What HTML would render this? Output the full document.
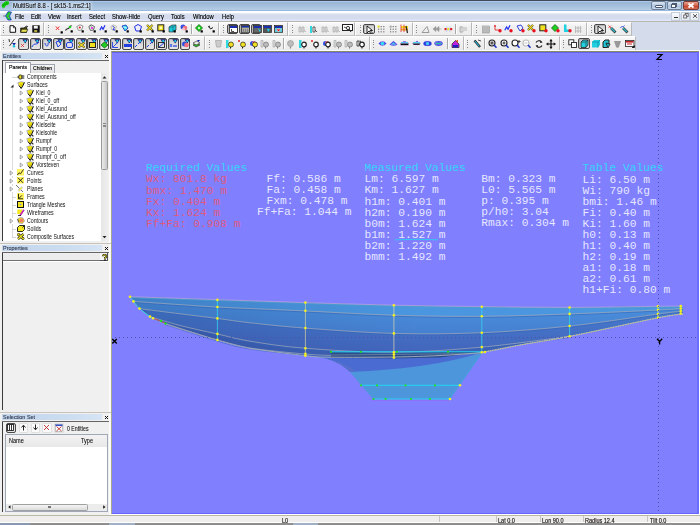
<!DOCTYPE html><html><head><meta charset="utf-8"><style>
html,body{margin:0;padding:0;}
body{width:700px;height:525px;position:relative;overflow:hidden;background:#f0f0f0;font-family:"Liberation Sans",sans-serif;}
div{box-sizing:border-box;}
.t{position:absolute;white-space:nowrap;transform-origin:0 0;font-family:"Liberation Sans",sans-serif;}
.ic{position:absolute;}
</style></head><body>
<div style="position:absolute;left:0px;top:0px;width:700px;height:11px;background:linear-gradient(#404a58 0,#404a58 1px,#a8c8ee 1px,#a8c8ee 2px,#98b4d2 2px,#b4cde6 10px,#98b8e0 10px,#98b8e0 11px)"></div>
<svg class="ic" style="left:0px;top:0px" width="11" height="10" viewBox="0 0 11 10"><path d="M1.6 4 L4 2.2 L5.5 .9 L8.8 .8 L9.6 3 L8.4 5.3 L6 5.8 L4.8 8 L2.4 8.4 L1.4 6.2 Z" fill="#10d010" stroke="#d0b0f0" stroke-width=".6"/><circle cx="3.3" cy="5.2" r=".6" fill="#087008"/><circle cx="6.8" cy="3" r=".6" fill="#087008"/><circle cx="5" cy="4" r=".5" fill="#087008"/></svg>
<div style="position:absolute;left:12px;top:2px;width:80px;height:7.5px;background:#c8daee;filter:blur(1.2px);opacity:.8"></div>
<div class="t" style="left:13px;top:2.93px;font-size:6.7px;line-height:6.7px;color:#000;transform:scaleX(0.87);-webkit-text-stroke:0.1px #000;text-shadow:0 0 2px #e8f0f8;">MultiSurf 8.8 - [ sk15-1.ms2:1]</div>
<div style="position:absolute;left:651px;top:1px;width:15px;height:9px;border:1px solid #6f8198;border-radius:2px;background:linear-gradient(#dbe6f3,#b8cbe3 50%,#a6bcd8 51%,#c6d8ee)"></div>
<div style="position:absolute;left:654.5px;top:4.5px;width:8px;height:3.5px;background:#fff;border:1px solid #4b5a70;border-radius:1px"></div>
<div style="position:absolute;left:667px;top:1px;width:15px;height:9px;border:1px solid #6f8198;border-radius:2px;background:linear-gradient(#dbe6f3,#b8cbe3 50%,#a6bcd8 51%,#c6d8ee)"></div>
<div style="position:absolute;left:672px;top:2.5px;width:5px;height:4px;border:1px solid #4b5a70;background:#fff"></div>
<div style="position:absolute;left:670.5px;top:4px;width:5px;height:4px;border:1px solid #4b5a70;background:#fff"></div>
<div style="position:absolute;left:683px;top:1px;width:16px;height:9px;border:1px solid #7d3a30;border-radius:2px;background:linear-gradient(#e8a898,#d0604a 50%,#c03a22 51%,#d8705a)"></div>
<svg class="ic" style="left:687px;top:2px" width="8" height="7"><path d="M1.5 1.5 L6.5 5.5 M6.5 1.5 L1.5 5.5" stroke="#fff" stroke-width="1.8"/></svg>
<div style="position:absolute;left:0px;top:11px;width:700px;height:10px;background:linear-gradient(#ffffff 0,#ffffff 2px,#e8ecf4 2px,#d4dcee 4px,#d4dcee 8px,#e0e6fa 9px,#e0e6fa 10px)"></div>
<svg class="ic" style="left:3px;top:11px" width="10" height="10" viewBox="0 0 10 10"><path d="M5 .7 L8.5 1 L6.5 5 L8.3 9 L5 9 L2.5 5 Z" fill="#20d020" stroke="#2030d0" stroke-width=".8"/><path d="M.5 4.6 L2.5 5 L.5 5.4Z" fill="#111"/><circle cx="5" cy="4" r=".5" fill="#b070b0"/><circle cx="5.5" cy="6.5" r=".5" fill="#b070b0"/></svg>
<div class="t" style="left:15px;top:13.84px;font-size:6.45px;line-height:6.45px;color:#000;transform:scaleX(0.9);-webkit-text-stroke:0.14px #000;">File</div>
<div class="t" style="left:31px;top:13.84px;font-size:6.45px;line-height:6.45px;color:#000;transform:scaleX(0.9);-webkit-text-stroke:0.14px #000;">Edit</div>
<div class="t" style="left:48px;top:13.84px;font-size:6.45px;line-height:6.45px;color:#000;transform:scaleX(0.9);-webkit-text-stroke:0.14px #000;">View</div>
<div class="t" style="left:67px;top:13.84px;font-size:6.45px;line-height:6.45px;color:#000;transform:scaleX(0.9);-webkit-text-stroke:0.14px #000;">Insert</div>
<div class="t" style="left:89px;top:13.84px;font-size:6.45px;line-height:6.45px;color:#000;transform:scaleX(0.9);-webkit-text-stroke:0.14px #000;">Select</div>
<div class="t" style="left:111.5px;top:13.84px;font-size:6.45px;line-height:6.45px;color:#000;transform:scaleX(0.9);-webkit-text-stroke:0.14px #000;">Show-Hide</div>
<div class="t" style="left:148px;top:13.84px;font-size:6.45px;line-height:6.45px;color:#000;transform:scaleX(0.9);-webkit-text-stroke:0.14px #000;">Query</div>
<div class="t" style="left:171.4px;top:13.84px;font-size:6.45px;line-height:6.45px;color:#000;transform:scaleX(0.9);-webkit-text-stroke:0.14px #000;">Tools</div>
<div class="t" style="left:192.5px;top:13.84px;font-size:6.45px;line-height:6.45px;color:#000;transform:scaleX(0.9);-webkit-text-stroke:0.14px #000;">Window</div>
<div class="t" style="left:221.7px;top:13.84px;font-size:6.45px;line-height:6.45px;color:#000;transform:scaleX(0.9);-webkit-text-stroke:0.14px #000;">Help</div>
<div style="position:absolute;left:671px;top:11.5px;width:9px;height:9px;background:linear-gradient(#f8fafc,#e4eaf2);border:1px solid #c4ccd8;"></div>
<div style="position:absolute;left:680.5px;top:11.5px;width:9px;height:9px;background:linear-gradient(#f8fafc,#e4eaf2);border:1px solid #c4ccd8;"></div>
<div style="position:absolute;left:690px;top:11.5px;width:9px;height:9px;background:linear-gradient(#f8fafc,#e4eaf2);border:1px solid #c4ccd8;"></div>
<div style="position:absolute;left:674px;top:17px;width:3.5px;height:1.2px;background:#333"></div>
<svg class="ic" style="left:682.5px;top:13px" width="6" height="6"><rect x="2.2" y="0.5" width="3" height="3" fill="none" stroke="#555" stroke-width=".8"/><rect x="0.7" y="2" width="3" height="3" fill="#eef" stroke="#555" stroke-width=".8"/></svg>
<svg class="ic" style="left:691.5px;top:13px" width="6" height="6"><path d="M1 1.2 L5 4.8 M5 1.2 L1 4.8" stroke="#444" stroke-width=".9"/></svg>
<div style="position:absolute;left:0px;top:21px;width:700px;height:1px;background:#b8b8b0"></div>
<div style="position:absolute;left:0px;top:22px;width:700px;height:29px;background:#d4dcec"></div>
<div style="position:absolute;left:0px;top:22px;width:44px;height:14px;background:linear-gradient(#fafafa,#f0f0f0 30%,#ececec);border-top:1px solid #fff;border-left:1px solid #fff;border-bottom:1px solid #c4c4c4;border-right:1px solid #b8b8b8"></div>
<div style="position:absolute;left:44px;top:22px;width:175px;height:14px;background:linear-gradient(#fafafa,#f0f0f0 30%,#ececec);border-top:1px solid #fff;border-left:1px solid #fff;border-bottom:1px solid #c4c4c4;border-right:1px solid #b8b8b8"></div>
<div style="position:absolute;left:219px;top:22px;width:69px;height:14px;background:linear-gradient(#fafafa,#f0f0f0 30%,#ececec);border-top:1px solid #fff;border-left:1px solid #fff;border-bottom:1px solid #c4c4c4;border-right:1px solid #b8b8b8"></div>
<div style="position:absolute;left:288px;top:22px;width:67px;height:14px;background:linear-gradient(#fafafa,#f0f0f0 30%,#ececec);border-top:1px solid #fff;border-left:1px solid #fff;border-bottom:1px solid #c4c4c4;border-right:1px solid #b8b8b8"></div>
<div style="position:absolute;left:355px;top:22px;width:58px;height:14px;background:linear-gradient(#fafafa,#f0f0f0 30%,#ececec);border-top:1px solid #fff;border-left:1px solid #fff;border-bottom:1px solid #c4c4c4;border-right:1px solid #b8b8b8"></div>
<div style="position:absolute;left:413px;top:22px;width:59px;height:14px;background:linear-gradient(#fafafa,#f0f0f0 30%,#ececec);border-top:1px solid #fff;border-left:1px solid #fff;border-bottom:1px solid #c4c4c4;border-right:1px solid #b8b8b8"></div>
<div style="position:absolute;left:472px;top:22px;width:115px;height:14px;background:linear-gradient(#fafafa,#f0f0f0 30%,#ececec);border-top:1px solid #fff;border-left:1px solid #fff;border-bottom:1px solid #c4c4c4;border-right:1px solid #b8b8b8"></div>
<div style="position:absolute;left:587px;top:22px;width:45px;height:14px;background:linear-gradient(#fafafa,#f0f0f0 30%,#ececec);border-top:1px solid #fff;border-left:1px solid #fff;border-bottom:1px solid #c4c4c4;border-right:1px solid #b8b8b8"></div>
<div style="position:absolute;left:0px;top:36px;width:205px;height:15px;background:linear-gradient(#fafafa,#f0f0f0 30%,#ececec);border-top:1px solid #fff;border-left:1px solid #fff;border-bottom:1px solid #c4c4c4;border-right:1px solid #b8b8b8"></div>
<div style="position:absolute;left:205px;top:36px;width:165px;height:15px;background:linear-gradient(#fafafa,#f0f0f0 30%,#ececec);border-top:1px solid #fff;border-left:1px solid #fff;border-bottom:1px solid #c4c4c4;border-right:1px solid #b8b8b8"></div>
<div style="position:absolute;left:370px;top:36px;width:94px;height:15px;background:linear-gradient(#fafafa,#f0f0f0 30%,#ececec);border-top:1px solid #fff;border-left:1px solid #fff;border-bottom:1px solid #c4c4c4;border-right:1px solid #b8b8b8"></div>
<div style="position:absolute;left:464px;top:36px;width:96px;height:15px;background:linear-gradient(#fafafa,#f0f0f0 30%,#ececec);border-top:1px solid #fff;border-left:1px solid #fff;border-bottom:1px solid #c4c4c4;border-right:1px solid #b8b8b8"></div>
<div style="position:absolute;left:560px;top:36px;width:76px;height:15px;background:linear-gradient(#fafafa,#f0f0f0 30%,#ececec);border-top:1px solid #fff;border-left:1px solid #fff;border-bottom:1px solid #c4c4c4;border-right:1px solid #b8b8b8"></div>
<div style="position:absolute;left:0px;top:50px;width:700px;height:1px;background:#fafafa"></div>
<div style="position:absolute;left:3px;top:25.0px;width:1px;height:1px;background:#8a8a8a"></div>
<div style="position:absolute;left:3px;top:27.4px;width:1px;height:1px;background:#8a8a8a"></div>
<div style="position:absolute;left:3px;top:29.8px;width:1px;height:1px;background:#8a8a8a"></div>
<div style="position:absolute;left:3px;top:32.2px;width:1px;height:1px;background:#8a8a8a"></div>
<div style="position:absolute;left:48px;top:25.0px;width:1px;height:1px;background:#8a8a8a"></div>
<div style="position:absolute;left:48px;top:27.4px;width:1px;height:1px;background:#8a8a8a"></div>
<div style="position:absolute;left:48px;top:29.8px;width:1px;height:1px;background:#8a8a8a"></div>
<div style="position:absolute;left:48px;top:32.2px;width:1px;height:1px;background:#8a8a8a"></div>
<div style="position:absolute;left:223px;top:25.0px;width:1px;height:1px;background:#8a8a8a"></div>
<div style="position:absolute;left:223px;top:27.4px;width:1px;height:1px;background:#8a8a8a"></div>
<div style="position:absolute;left:223px;top:29.8px;width:1px;height:1px;background:#8a8a8a"></div>
<div style="position:absolute;left:223px;top:32.2px;width:1px;height:1px;background:#8a8a8a"></div>
<div style="position:absolute;left:292px;top:25.0px;width:1px;height:1px;background:#8a8a8a"></div>
<div style="position:absolute;left:292px;top:27.4px;width:1px;height:1px;background:#8a8a8a"></div>
<div style="position:absolute;left:292px;top:29.8px;width:1px;height:1px;background:#8a8a8a"></div>
<div style="position:absolute;left:292px;top:32.2px;width:1px;height:1px;background:#8a8a8a"></div>
<div style="position:absolute;left:360px;top:25.0px;width:1px;height:1px;background:#8a8a8a"></div>
<div style="position:absolute;left:360px;top:27.4px;width:1px;height:1px;background:#8a8a8a"></div>
<div style="position:absolute;left:360px;top:29.8px;width:1px;height:1px;background:#8a8a8a"></div>
<div style="position:absolute;left:360px;top:32.2px;width:1px;height:1px;background:#8a8a8a"></div>
<div style="position:absolute;left:416px;top:25.0px;width:1px;height:1px;background:#8a8a8a"></div>
<div style="position:absolute;left:416px;top:27.4px;width:1px;height:1px;background:#8a8a8a"></div>
<div style="position:absolute;left:416px;top:29.8px;width:1px;height:1px;background:#8a8a8a"></div>
<div style="position:absolute;left:416px;top:32.2px;width:1px;height:1px;background:#8a8a8a"></div>
<div style="position:absolute;left:476px;top:25.0px;width:1px;height:1px;background:#8a8a8a"></div>
<div style="position:absolute;left:476px;top:27.4px;width:1px;height:1px;background:#8a8a8a"></div>
<div style="position:absolute;left:476px;top:29.8px;width:1px;height:1px;background:#8a8a8a"></div>
<div style="position:absolute;left:476px;top:32.2px;width:1px;height:1px;background:#8a8a8a"></div>
<div style="position:absolute;left:591px;top:25.0px;width:1px;height:1px;background:#8a8a8a"></div>
<div style="position:absolute;left:591px;top:27.4px;width:1px;height:1px;background:#8a8a8a"></div>
<div style="position:absolute;left:591px;top:29.8px;width:1px;height:1px;background:#8a8a8a"></div>
<div style="position:absolute;left:591px;top:32.2px;width:1px;height:1px;background:#8a8a8a"></div>
<div style="position:absolute;left:3px;top:39.5px;width:1px;height:1px;background:#8a8a8a"></div>
<div style="position:absolute;left:3px;top:41.9px;width:1px;height:1px;background:#8a8a8a"></div>
<div style="position:absolute;left:3px;top:44.3px;width:1px;height:1px;background:#8a8a8a"></div>
<div style="position:absolute;left:3px;top:46.7px;width:1px;height:1px;background:#8a8a8a"></div>
<div style="position:absolute;left:209px;top:39.5px;width:1px;height:1px;background:#8a8a8a"></div>
<div style="position:absolute;left:209px;top:41.9px;width:1px;height:1px;background:#8a8a8a"></div>
<div style="position:absolute;left:209px;top:44.3px;width:1px;height:1px;background:#8a8a8a"></div>
<div style="position:absolute;left:209px;top:46.7px;width:1px;height:1px;background:#8a8a8a"></div>
<div style="position:absolute;left:373px;top:39.5px;width:1px;height:1px;background:#8a8a8a"></div>
<div style="position:absolute;left:373px;top:41.9px;width:1px;height:1px;background:#8a8a8a"></div>
<div style="position:absolute;left:373px;top:44.3px;width:1px;height:1px;background:#8a8a8a"></div>
<div style="position:absolute;left:373px;top:46.7px;width:1px;height:1px;background:#8a8a8a"></div>
<div style="position:absolute;left:467px;top:39.5px;width:1px;height:1px;background:#8a8a8a"></div>
<div style="position:absolute;left:467px;top:41.9px;width:1px;height:1px;background:#8a8a8a"></div>
<div style="position:absolute;left:467px;top:44.3px;width:1px;height:1px;background:#8a8a8a"></div>
<div style="position:absolute;left:467px;top:46.7px;width:1px;height:1px;background:#8a8a8a"></div>
<div style="position:absolute;left:563px;top:39.5px;width:1px;height:1px;background:#8a8a8a"></div>
<div style="position:absolute;left:563px;top:41.9px;width:1px;height:1px;background:#8a8a8a"></div>
<div style="position:absolute;left:563px;top:44.3px;width:1px;height:1px;background:#8a8a8a"></div>
<div style="position:absolute;left:563px;top:46.7px;width:1px;height:1px;background:#8a8a8a"></div>
<div style="position:absolute;left:191px;top:24px;width:1px;height:10px;background:#a8a8a8"></div>
<div style="position:absolute;left:192px;top:24px;width:1px;height:10px;background:#fff"></div>
<div style="position:absolute;left:455px;top:24px;width:1px;height:10px;background:#a8a8a8"></div>
<div style="position:absolute;left:456px;top:24px;width:1px;height:10px;background:#fff"></div>
<div style="position:absolute;left:283px;top:38px;width:1px;height:11px;background:#a8a8a8"></div>
<div style="position:absolute;left:284px;top:38px;width:1px;height:11px;background:#fff"></div>
<div style="position:absolute;left:447px;top:38px;width:1px;height:11px;background:#a8a8a8"></div>
<div style="position:absolute;left:448px;top:38px;width:1px;height:11px;background:#fff"></div>
<div style="position:absolute;left:484px;top:38px;width:1px;height:11px;background:#a8a8a8"></div>
<div style="position:absolute;left:485px;top:38px;width:1px;height:11px;background:#fff"></div>
<svg class="ic" style="left:9px;top:24.5px" width="8" height="8" viewBox="0 0 8 8"><path d="M1 .7H4.5L6.6 2.8V7.3H1Z" fill="#fff" stroke="#111" stroke-width="1"/><path d="M4.5 .7V2.8H6.6" stroke="#111" fill="none" stroke-width=".7"/></svg>
<svg class="ic" style="left:20px;top:24.5px" width="9" height="8" viewBox="0 0 9 8"><path d="M.7 3H4L5 2.2H6.5V7.3H.7Z" fill="#5a5410" stroke="#111" stroke-width=".8"/><path d="M1.5 4.2H7.8L6.5 7.3H.7Z" fill="#e8e050" stroke="#111" stroke-width=".7"/><path d="M5.5 1.5Q7 .5 8 2" stroke="#111" fill="none" stroke-width=".9"/></svg>
<svg class="ic" style="left:31.5px;top:24.5px" width="8" height="8" viewBox="0 0 8 8"><rect x=".3" y=".3" width="7.4" height="7.4" fill="#111"/><rect x="1.8" y=".8" width="4" height="2.8" fill="#f4f4f4"/><rect x="2.2" y="5" width="3" height="2.2" fill="#b0a840"/></svg>
<svg class="ic" style="left:55px;top:24.5px" width="9" height="9" viewBox="0 0 9 9"><path d="M.8 1.5L4.3 5M4.3 1.5L.8 5" stroke="#f03030" stroke-width="1"/><rect x="5.6" y="6.3" width="2.2" height="2.2" fill="#000"/></svg>
<svg class="ic" style="left:65px;top:24px" width="9" height="9" viewBox="0 0 9 9"><path d="M.5 6.5 C1.5 4,3 5.5,4 4 S5.5 2,6.5 1.5" stroke="#222" fill="none" stroke-width="1.1"/><circle cx="5" cy="3" r="1.3" fill="#20d020"/><rect x="5.6" y="6.3" width="2.2" height="2.2" fill="#000"/></svg>
<svg class="ic" style="left:76px;top:24px" width="9" height="9" viewBox="0 0 9 9"><path d="M.8 2.5L4 .8L7 2L5.5 6L2.5 6.5Z" fill="#fff" stroke="#888" stroke-width=".9"/><circle cx="3.8" cy="3.5" r="1.1" fill="#e02020"/><rect x="5.6" y="6.3" width="2.2" height="2.2" fill="#000"/></svg>
<svg class="ic" style="left:87.5px;top:24px" width="9" height="9" viewBox="0 0 9 9"><path d="M.8 2.5L3 .8L6.5 2.5L5.5 6L2.5 6.5Z" fill="#eee" stroke="#555" stroke-width=".9"/><path d="M2 1L5 5" stroke="#282" stroke-width=".6"/><circle cx="4" cy="4" r="1.1" fill="#f020f0"/><rect x="5.6" y="6.3" width="2.2" height="2.2" fill="#000"/></svg>
<svg class="ic" style="left:99px;top:24px" width="9" height="9" viewBox="0 0 9 9"><path d="M.8 6.3 L2.6 3 L4 5.3 L6 1.2" stroke="#2030f0" fill="none" stroke-width="1.2"/><rect x="5.6" y="6.3" width="2.2" height="2.2" fill="#000"/></svg>
<svg class="ic" style="left:110px;top:24px" width="9" height="9" viewBox="0 0 9 9"><path d="M.8 2.5L3.5 .8L6.5 2.5L5 6.5L2 6Z" fill="#f0f0d0" stroke="#aaa" stroke-width=".7"/><path d="M2.5 2L4.5 3.5L3 5.5L5 6" stroke="#2030f0" fill="none" stroke-width="1"/><rect x="5.6" y="6.3" width="2.2" height="2.2" fill="#000"/></svg>
<svg class="ic" style="left:121px;top:24px" width="9" height="9" viewBox="0 0 9 9"><path d="M1 2L5 1L7 4L4 7Z" fill="#40e0f0" stroke="#2040c0" stroke-width=".9"/><path d="M2 3L6 4" stroke="#fff" stroke-width=".6"/><rect x="5.6" y="6.3" width="2.2" height="2.2" fill="#000"/></svg>
<svg class="ic" style="left:134px;top:24px" width="9" height="9" viewBox="0 0 9 9"><path d="M.5 2.5L4 .5L7.5 2.5L6 7L2 7Z" fill="#eef" stroke="#2030e0" stroke-width="1"/><rect x="5.6" y="6.3" width="2.2" height="2.2" fill="#000"/></svg>
<svg class="ic" style="left:146px;top:24px" width="9" height="9" viewBox="0 0 9 9"><path d="M1 1L6.5 6.5M6.5 1L1 6.5" stroke="#222" stroke-width="2"/><path d="M1 1L6.5 6.5M6.5 1L1 6.5" stroke="#f0e020" stroke-width="1.1"/><rect x="5.6" y="6.3" width="2.2" height="2.2" fill="#000"/></svg>
<svg class="ic" style="left:157px;top:24px" width="9" height="9" viewBox="0 0 9 9"><rect x=".8" y=".8" width="6" height="6" fill="#f0e020" stroke="#222" stroke-width="1"/><rect x="2.5" y="2.5" width="2.5" height="2.5" fill="#fffbb0"/><rect x="5.6" y="6.3" width="2.2" height="2.2" fill="#000"/></svg>
<svg class="ic" style="left:168px;top:24px" width="10" height="9" viewBox="0 0 10 9"><path d="M1 3L4 1H8L8 6L5 8H1Z" fill="#20c8d8" stroke="#333" stroke-width=".7"/><path d="M1 3H5V8M5 3L8 1" stroke="#106878" fill="none" stroke-width=".7"/><rect x="5.6" y="6.3" width="2.2" height="2.2" fill="#000"/></svg>
<svg class="ic" style="left:180px;top:24px" width="9" height="9" viewBox="0 0 9 9"><circle cx="3" cy="3" r="2.5" fill="#3050e0"/><circle cx="5" cy="4" r="2.3" fill="#f07080"/><circle cx="3.5" cy="5" r="1.5" fill="#f0c0d0"/><rect x="5.6" y="6.3" width="2.2" height="2.2" fill="#000"/></svg>
<svg class="ic" style="left:195px;top:24px" width="9" height="9" viewBox="0 0 9 9"><path d="M4 .5L7.5 4L4 7.5L.5 4Z" fill="#20d020" stroke="#106010" stroke-width=".8"/><rect x="3" y="3" width="2" height="2" fill="#bfb"/><rect x="5.6" y="6.3" width="2.2" height="2.2" fill="#000"/></svg>
<svg class="ic" style="left:207px;top:24px" width="9" height="9" viewBox="0 0 9 9"><path d="M1 3L3 2M2 2.5L3.5 5L6 3.5" stroke="#222" fill="none" stroke-width="1"/><rect x="5.6" y="6.3" width="2.2" height="2.2" fill="#000"/></svg>
<div style="position:absolute;left:227px;top:24px;width:11px;height:10px;border:1px solid #484848;border-radius:2px;background:linear-gradient(#cfcfcf,#dedede 60%,#e6e6e6);box-shadow:inset 1px 1px 0 #b8b8b8"></div>
<div style="position:absolute;left:239px;top:24px;width:11px;height:10px;border:1px solid #484848;border-radius:2px;background:linear-gradient(#cfcfcf,#dedede 60%,#e6e6e6);box-shadow:inset 1px 1px 0 #b8b8b8"></div>
<div style="position:absolute;left:251px;top:24px;width:10px;height:10px;border:1px solid #484848;border-radius:2px;background:linear-gradient(#cfcfcf,#dedede 60%,#e6e6e6);box-shadow:inset 1px 1px 0 #b8b8b8"></div>
<svg class="ic" style="left:229px;top:25px" width="9" height="8" viewBox="0 0 9 8"><rect x=".5" y=".5" width="8" height="7" fill="#fff" stroke="#222" stroke-width=".8"/><rect x="1" y="1" width="7" height="2" fill="#1830b0"/><path d="M2.5 4V6.5H5" stroke="#222" fill="none" stroke-width=".8"/></svg>
<svg class="ic" style="left:241px;top:25px" width="9" height="8" viewBox="0 0 9 8"><rect x=".5" y=".5" width="8" height="7" fill="#fff" stroke="#222" stroke-width=".8"/><rect x="1" y="1" width="7" height="2" fill="#1830b0"/><rect x="1" y="3" width="7" height="4.2" fill="#a8a8a8"/><path d="M2.5 3.5V7M4.5 3.5V7M6.5 3.5V7" stroke="#666" stroke-width=".6"/><path d="M1 3H8" stroke="#e8e070" stroke-width=".6"/></svg>
<svg class="ic" style="left:252.5px;top:25px" width="9" height="8" viewBox="0 0 9 8"><rect x=".5" y=".5" width="8" height="7" fill="#fff" stroke="#222" stroke-width=".8"/><rect x="1" y="1" width="7" height="2" fill="#1830b0"/><rect x="1" y="3" width="7" height="4" fill="#666"/><path d="M5 3L8 6L6.5 6.5L7 8Z" fill="#20d8e8"/></svg>
<svg class="ic" style="left:263px;top:25px" width="9" height="8" viewBox="0 0 9 8"><rect x=".5" y=".5" width="8" height="7" fill="#fff" stroke="#222" stroke-width=".8"/><rect x="1" y="1" width="7" height="2" fill="#1830b0"/><rect x="1" y="3" width="7" height="4" fill="#555"/><path d="M4 3.5L7 4.5L5 7Z" fill="#20d8e8"/></svg>
<svg class="ic" style="left:274px;top:25px" width="9" height="8" viewBox="0 0 9 8"><rect x=".5" y=".5" width="8" height="7" fill="#fff" stroke="#222" stroke-width=".8"/><rect x="1" y="1" width="7" height="2" fill="#1830b0"/><rect x="1" y="3" width="7" height="4.2" fill="#60c8d8"/><path d="M4.5 7L2.8 4.8Q2.8 3.3 4.5 4.2Q6.2 3.3 6.2 4.8Z" fill="#e01010" stroke="#fff" stroke-width=".5"/></svg>
<svg class="ic" style="left:298px;top:24.5px" width="9" height="9" viewBox="0 0 9 9"><path d="M1 2H3V7H1ZM4 2H6V7H4ZM6 5L8 7" stroke="#aaa" fill="#ddd" stroke-width=".7"/></svg>
<svg class="ic" style="left:309px;top:24.5px" width="9" height="9" viewBox="0 0 9 9"><rect x="1" y="1" width="2" height="7" fill="#30d8e0"/><path d="M4 2H6V7H4ZM6 5L8 7" stroke="#222" fill="#fff" stroke-width=".7"/></svg>
<svg class="ic" style="left:321px;top:24.5px" width="9" height="9" viewBox="0 0 9 9"><path d="M1 2H3V7H1ZM4 2H6V7H4ZM6 5L8 7" stroke="#aaa" fill="#ddd" stroke-width=".7"/></svg>
<svg class="ic" style="left:332px;top:24.5px" width="9" height="9" viewBox="0 0 9 9"><path d="M1 2H3V7H1ZM4 2H6V7H4ZM6 5L8 7" stroke="#aaa" fill="#ddd" stroke-width=".7"/></svg>
<svg class="ic" style="left:342px;top:24px" width="11" height="9" viewBox="0 0 11 9"><rect x=".5" y=".5" width="10" height="6" fill="#fff" stroke="#222" stroke-width="1"/><circle cx="6" cy="4" r="1.6" fill="none" stroke="#222" stroke-width=".9"/><path d="M7 5L9 8" stroke="#222" stroke-width="1"/><path d="M2 3L4 4" stroke="#222" stroke-width=".8"/></svg>
<div style="position:absolute;left:363px;top:24px;width:12px;height:10px;border:1px solid #484848;border-radius:2px;background:linear-gradient(#cfcfcf,#dedede 60%,#e6e6e6);box-shadow:inset 1px 1px 0 #b8b8b8"></div>
<svg class="ic" style="left:365px;top:25px" width="9" height="9" viewBox="0 0 9 9"><path d="M2 1V8L4 6L6 8.5L7 7.5L5 5.5H7.5Z" fill="#fff" stroke="#111" stroke-width=".9"/></svg>
<svg class="ic" style="left:377px;top:24.5px" width="9" height="9" viewBox="0 0 9 9"><rect x="1.0" y="1.0" width="1.2" height="1.2" fill="#777"/><rect x="3.6" y="1.0" width="1.2" height="1.2" fill="#777"/><rect x="6.2" y="1.0" width="1.2" height="1.2" fill="#777"/><rect x="1.0" y="3.6" width="1.2" height="1.2" fill="#777"/><rect x="3.6" y="3.6" width="1.2" height="1.2" fill="#777"/><rect x="6.2" y="3.6" width="1.2" height="1.2" fill="#777"/><rect x="1.0" y="6.2" width="1.2" height="1.2" fill="#777"/><rect x="3.6" y="6.2" width="1.2" height="1.2" fill="#777"/><rect x="6.2" y="6.2" width="1.2" height="1.2" fill="#777"/><rect x=".6" y=".6" width="2" height="2" fill="#e8e020"/></svg>
<svg class="ic" style="left:388.5px;top:24.5px" width="9" height="9" viewBox="0 0 9 9"><rect x="1.0" y="1.0" width="1.2" height="1.2" fill="#777"/><rect x="3.6" y="1.0" width="1.2" height="1.2" fill="#777"/><rect x="6.2" y="1.0" width="1.2" height="1.2" fill="#777"/><rect x="1.0" y="3.6" width="1.2" height="1.2" fill="#777"/><rect x="3.6" y="3.6" width="1.2" height="1.2" fill="#777"/><rect x="6.2" y="3.6" width="1.2" height="1.2" fill="#777"/><rect x="1.0" y="6.2" width="1.2" height="1.2" fill="#777"/><rect x="3.6" y="6.2" width="1.2" height="1.2" fill="#777"/><rect x="6.2" y="6.2" width="1.2" height="1.2" fill="#777"/><rect x=".6" y=".6" width="2" height="2" fill="#aaa"/></svg>
<svg class="ic" style="left:400px;top:24px" width="9" height="10" viewBox="0 0 9 10"><rect x="1" y="2" width="7" height="2" fill="#f0e020"/><rect x="1" y="4.5" width="7" height="2" fill="#f0a020"/><path d="M1 .5V8M4 .5V8" stroke="#e03030" stroke-width=".8"/><path d="M6 2L7.5 9" stroke="#222" stroke-width="1.2"/></svg>
<svg class="ic" style="left:421px;top:24.5px" width="9" height="9" viewBox="0 0 9 9"><path d="M1 7.5L6 1.5L8 7.5Z" fill="none" stroke="#999" stroke-width="1"/><path d="M2 7.5H8" stroke="#999"/></svg>
<svg class="ic" style="left:432px;top:25px" width="10" height="8" viewBox="0 0 10 8"><path d="M1 4L4 1.5V6.5ZM4 4L7 1.5V6.5ZM7 4H9.5" fill="#999" stroke="#999" stroke-width=".6"/></svg>
<svg class="ic" style="left:444px;top:25px" width="9" height="8" viewBox="0 0 9 8"><rect x=".5" y="3" width="2.2" height="2.2" fill="#e02020"/><rect x="3.2" y="3" width="2.2" height="2.2" fill="#e8e020"/><rect x="6" y="3" width="2.2" height="2.2" fill="#e02020"/><path d="M2.8 1.5V7M5.8 1.5V7" stroke="#9af" stroke-width=".5"/></svg>
<svg class="ic" style="left:459px;top:24.5px" width="9" height="9" viewBox="0 0 9 9"><path d="M1 2H4V7H1ZM5 3H8M5 5H8M2 1V8" stroke="#aaa" fill="none" stroke-width=".8"/></svg>
<svg class="ic" style="left:482px;top:24.5px" width="9" height="9" viewBox="0 0 9 9"><rect x=".5" y="1" width="7" height="7" fill="#c8c8c8" stroke="#999" stroke-width=".6"/><path d="M.5 3H7.5M.5 5H7.5M.5 7H7.5" stroke="#999" stroke-width=".6"/></svg>
<svg class="ic" style="left:493px;top:24px" width="10" height="9" viewBox="0 0 10 9"><path d="M1 1L3 3M3 1L1 3" stroke="#e03030" stroke-width=".8"/><path d="M2 3V6H7" stroke="#e03030" stroke-width=".9" fill="none"/><circle cx="7" cy="6.8" r="1.7" fill="#e81020"/></svg>
<svg class="ic" style="left:504px;top:24px" width="10" height="9" viewBox="0 0 10 9"><path d="M.8 6.3 L2.6 3 L4 5.3 L6 1.2" stroke="#2030f0" fill="none" stroke-width="1.2"/><circle cx="7" cy="6.8" r="1.7" fill="#e81020"/></svg>
<svg class="ic" style="left:515.5px;top:24px" width="10" height="9" viewBox="0 0 10 9"><path d="M1 2L5 1L7 4L4 7Z" fill="#eef" stroke="#2030d0" stroke-width=".9"/><circle cx="7" cy="6.8" r="1.7" fill="#e81020"/></svg>
<svg class="ic" style="left:527px;top:24px" width="10" height="9" viewBox="0 0 10 9"><path d="M1 1L6 6M6 1L1 6" stroke="#222" stroke-width="2"/><path d="M1 1L6 6M6 1L1 6" stroke="#f0e020" stroke-width="1.1"/><circle cx="7" cy="6.8" r="1.7" fill="#e81020"/></svg>
<svg class="ic" style="left:539px;top:24px" width="10" height="9" viewBox="0 0 10 9"><rect x=".8" y=".8" width="6" height="6" fill="#f0e020" stroke="#222" stroke-width="1"/><circle cx="7" cy="6.8" r="1.7" fill="#e81020"/></svg>
<svg class="ic" style="left:550.5px;top:24px" width="10" height="9" viewBox="0 0 10 9"><path d="M4 .5L7.5 4L4 7.5L.5 4Z" fill="#20d020" stroke="#106010" stroke-width=".8"/><circle cx="7" cy="6.8" r="1.7" fill="#e81020"/></svg>
<svg class="ic" style="left:562.5px;top:24px" width="10" height="9" viewBox="0 0 10 9"><rect x="1" y=".5" width="2.5" height="7.5" fill="#20d0e0"/><rect x="1" y="5.5" width="5" height="2.5" fill="#20d0e0"/><circle cx="7" cy="6.8" r="1.7" fill="#e81020"/></svg>
<svg class="ic" style="left:574px;top:24.5px" width="9" height="9" viewBox="0 0 9 9"><path d="M1.5 1V8M4 1V8M6.5 1V8M1 3H7.5M1 6H7.5" stroke="#aaa" stroke-width=".7"/></svg>
<div style="position:absolute;left:594px;top:24px;width:12px;height:10px;border:1px solid #484848;border-radius:2px;background:linear-gradient(#cfcfcf,#dedede 60%,#e6e6e6);box-shadow:inset 1px 1px 0 #b8b8b8"></div>
<svg class="ic" style="left:596px;top:25px" width="9" height="9" viewBox="0 0 9 9"><path d="M2 1V8L4 6L6 8.5L7 7.5L5 5.5H7.5Z" fill="#fff" stroke="#111" stroke-width=".9"/></svg>
<svg class="ic" style="left:608px;top:24.5px" width="9" height="9" viewBox="0 0 9 9"><path d="M.5 .5L3 3M3 .5L.5 3" stroke="#e03030" stroke-width=".8"/><path d="M3 3L7.5 7.5" stroke="#333" stroke-width="2.6"/><path d="M3 3L7 7" stroke="#30c0d0" stroke-width="1.2"/></svg>
<svg class="ic" style="left:620px;top:24.5px" width="9" height="9" viewBox="0 0 9 9"><path d="M.5 3C2 0,3 3,4.5 .5" stroke="#2030e0" fill="none" stroke-width=".8"/><path d="M3 3L7.5 7.5" stroke="#333" stroke-width="2.6"/><path d="M3 3L7 7" stroke="#30c0d0" stroke-width="1.2"/></svg>
<svg class="ic" style="left:8px;top:38px" width="9" height="11" viewBox="0 0 9 11"><path d="M1 1L1.5 4M6.5 1L1.5 8" stroke="#222" stroke-width=".9"/><path d="M4 5L8 5L6 7.5Z" fill="#1020a0"/><circle cx="6" cy="8.3" r="1.3" fill="#20c0e0"/></svg>
<div style="position:absolute;left:18px;top:38px;width:11px;height:11.5px;border:1px solid #484848;border-radius:2px;background:linear-gradient(#cfcfcf,#dedede 60%,#e6e6e6);box-shadow:inset 1px 1px 0 #b8b8b8"></div>
<div style="position:absolute;left:30px;top:38px;width:11px;height:11.5px;border:1px solid #484848;border-radius:2px;background:linear-gradient(#cfcfcf,#dedede 60%,#e6e6e6);box-shadow:inset 1px 1px 0 #b8b8b8"></div>
<div style="position:absolute;left:42px;top:38px;width:10px;height:11.5px;border:1px solid #484848;border-radius:2px;background:linear-gradient(#cfcfcf,#dedede 60%,#e6e6e6);box-shadow:inset 1px 1px 0 #b8b8b8"></div>
<div style="position:absolute;left:53px;top:38px;width:11px;height:11.5px;border:1px solid #484848;border-radius:2px;background:linear-gradient(#cfcfcf,#dedede 60%,#e6e6e6);box-shadow:inset 1px 1px 0 #b8b8b8"></div>
<div style="position:absolute;left:64px;top:38px;width:11px;height:11.5px;border:1px solid #484848;border-radius:2px;background:linear-gradient(#cfcfcf,#dedede 60%,#e6e6e6);box-shadow:inset 1px 1px 0 #b8b8b8"></div>
<div style="position:absolute;left:76px;top:38px;width:11px;height:11.5px;border:1px solid #484848;border-radius:2px;background:linear-gradient(#cfcfcf,#dedede 60%,#e6e6e6);box-shadow:inset 1px 1px 0 #b8b8b8"></div>
<div style="position:absolute;left:87px;top:38px;width:11px;height:11.5px;border:1px solid #484848;border-radius:2px;background:linear-gradient(#cfcfcf,#dedede 60%,#e6e6e6);box-shadow:inset 1px 1px 0 #b8b8b8"></div>
<div style="position:absolute;left:99px;top:38px;width:10px;height:11.5px;border:1px solid #484848;border-radius:2px;background:linear-gradient(#cfcfcf,#dedede 60%,#e6e6e6);box-shadow:inset 1px 1px 0 #b8b8b8"></div>
<div style="position:absolute;left:110px;top:38px;width:11px;height:11.5px;border:1px solid #484848;border-radius:2px;background:linear-gradient(#cfcfcf,#dedede 60%,#e6e6e6);box-shadow:inset 1px 1px 0 #b8b8b8"></div>
<div style="position:absolute;left:122px;top:38px;width:10px;height:11.5px;border:1px solid #484848;border-radius:2px;background:linear-gradient(#cfcfcf,#dedede 60%,#e6e6e6);box-shadow:inset 1px 1px 0 #b8b8b8"></div>
<div style="position:absolute;left:133px;top:38px;width:11px;height:11.5px;border:1px solid #484848;border-radius:2px;background:linear-gradient(#cfcfcf,#dedede 60%,#e6e6e6);box-shadow:inset 1px 1px 0 #b8b8b8"></div>
<div style="position:absolute;left:145px;top:38px;width:10px;height:11.5px;border:1px solid #484848;border-radius:2px;background:linear-gradient(#cfcfcf,#dedede 60%,#e6e6e6);box-shadow:inset 1px 1px 0 #b8b8b8"></div>
<div style="position:absolute;left:156px;top:38px;width:11px;height:11.5px;border:1px solid #484848;border-radius:2px;background:linear-gradient(#cfcfcf,#dedede 60%,#e6e6e6);box-shadow:inset 1px 1px 0 #b8b8b8"></div>
<div style="position:absolute;left:168px;top:38px;width:11px;height:11.5px;border:1px solid #484848;border-radius:2px;background:linear-gradient(#cfcfcf,#dedede 60%,#e6e6e6);box-shadow:inset 1px 1px 0 #b8b8b8"></div>
<div style="position:absolute;left:180px;top:38px;width:10px;height:11.5px;border:1px solid #484848;border-radius:2px;background:linear-gradient(#cfcfcf,#dedede 60%,#e6e6e6);box-shadow:inset 1px 1px 0 #b8b8b8"></div>
<svg class="ic" style="left:19px;top:38.5px" width="10" height="10" viewBox="0 0 10 10"><path d="M3.3 .3L9 .3L6.2 4.6Z" fill="#101870"/><circle cx="6.2" cy="2" r="1.1" fill="#20d8f0"/><path d="M2 5L5 8M5 5L2 8" stroke="#e03030" stroke-width=".8"/></svg>
<svg class="ic" style="left:31px;top:38.5px" width="10" height="10" viewBox="0 0 10 10"><path d="M3.3 .3L9 .3L6.2 4.6Z" fill="#101870"/><circle cx="6.2" cy="2" r="1.1" fill="#20d8f0"/><path d="M1 8C3 3,5 7,8 3" stroke="#2040e0" fill="none" stroke-width="1"/></svg>
<svg class="ic" style="left:43px;top:38.5px" width="10" height="10" viewBox="0 0 10 10"><path d="M3.3 .3L9 .3L6.2 4.6Z" fill="#101870"/><circle cx="6.2" cy="2" r="1.1" fill="#20d8f0"/><path d="M2 4C2 8,6 8,5 4" stroke="#2040e0" fill="#ccd" stroke-width=".9"/></svg>
<svg class="ic" style="left:54px;top:38.5px" width="10" height="10" viewBox="0 0 10 10"><path d="M3.3 .3L9 .3L6.2 4.6Z" fill="#101870"/><circle cx="6.2" cy="2" r="1.1" fill="#20d8f0"/><path d="M2 3L5 2L7 5L4 8Z" fill="none" stroke="#2040e0" stroke-width="1"/></svg>
<svg class="ic" style="left:65px;top:38.5px" width="10" height="10" viewBox="0 0 10 10"><path d="M3.3 .3L9 .3L6.2 4.6Z" fill="#101870"/><circle cx="6.2" cy="2" r="1.1" fill="#20d8f0"/><rect x="1.5" y="3.5" width="6" height="5" rx="1.5" fill="#dde" stroke="#2040e0" stroke-width="1"/></svg>
<svg class="ic" style="left:77px;top:38.5px" width="10" height="10" viewBox="0 0 10 10"><path d="M3.3 .3L9 .3L6.2 4.6Z" fill="#101870"/><circle cx="6.2" cy="2" r="1.1" fill="#20d8f0"/><path d="M1.5 3.5L7.5 8.5M7.5 3.5L1.5 8.5" stroke="#222" stroke-width="2"/><path d="M1.5 3.5L7.5 8.5M7.5 3.5L1.5 8.5" stroke="#f0e020" stroke-width="1.1"/></svg>
<svg class="ic" style="left:88px;top:38.5px" width="10" height="10" viewBox="0 0 10 10"><path d="M3.3 .3L9 .3L6.2 4.6Z" fill="#101870"/><circle cx="6.2" cy="2" r="1.1" fill="#20d8f0"/><rect x="1.5" y="3.5" width="6" height="5" fill="#f0e020" stroke="#222" stroke-width="1"/></svg>
<svg class="ic" style="left:100px;top:38.5px" width="10" height="10" viewBox="0 0 10 10"><path d="M3.3 .3L9 .3L6.2 4.6Z" fill="#101870"/><circle cx="6.2" cy="2" r="1.1" fill="#20d8f0"/><path d="M4.5 3L8 6L4.5 9L1 6Z" fill="#20d020" stroke="#106010" stroke-width=".8"/></svg>
<svg class="ic" style="left:111px;top:38.5px" width="10" height="10" viewBox="0 0 10 10"><path d="M3.3 .3L9 .3L6.2 4.6Z" fill="#101870"/><circle cx="6.2" cy="2" r="1.1" fill="#20d8f0"/><path d="M1.5 3V8.5H7M2 8L7 3" stroke="#2040e0" fill="none" stroke-width=".9"/></svg>
<svg class="ic" style="left:123px;top:38.5px" width="10" height="10" viewBox="0 0 10 10"><path d="M3.3 .3L9 .3L6.2 4.6Z" fill="#101870"/><circle cx="6.2" cy="2" r="1.1" fill="#20d8f0"/><rect x="1" y="5" width="8" height="3" fill="#2040e0"/><rect x="1" y="4" width="8" height="1" fill="#ccc"/></svg>
<svg class="ic" style="left:134px;top:38.5px" width="10" height="10" viewBox="0 0 10 10"><path d="M3.3 .3L9 .3L6.2 4.6Z" fill="#101870"/><circle cx="6.2" cy="2" r="1.1" fill="#20d8f0"/><path d="M1 8L3 6M4 5L6 3" stroke="#2040e0" stroke-width="1"/></svg>
<svg class="ic" style="left:146px;top:38.5px" width="10" height="10" viewBox="0 0 10 10"><path d="M3.3 .3L9 .3L6.2 4.6Z" fill="#101870"/><circle cx="6.2" cy="2" r="1.1" fill="#20d8f0"/><path d="M1 8L3 6M4 5L6 3" stroke="#2040e0" stroke-width="1"/></svg>
<svg class="ic" style="left:157px;top:38.5px" width="10" height="10" viewBox="0 0 10 10"><path d="M3.3 .3L9 .3L6.2 4.6Z" fill="#101870"/><circle cx="6.2" cy="2" r="1.1" fill="#20d8f0"/><rect x="1.5" y="3.5" width="6" height="5" fill="none" stroke="#222" stroke-width=".9"/><path d="M2 8L7 4" stroke="#2040e0" stroke-width="1"/></svg>
<svg class="ic" style="left:169px;top:38.5px" width="10" height="10" viewBox="0 0 10 10"><path d="M3.3 .3L9 .3L6.2 4.6Z" fill="#101870"/><circle cx="6.2" cy="2" r="1.1" fill="#20d8f0"/><path d="M1 5L3 8M3 5L1 8" stroke="#2040e0" stroke-width=".8"/><path d="M4 7H8" stroke="#2040e0" stroke-width="1.2"/></svg>
<svg class="ic" style="left:181px;top:38.5px" width="10" height="10" viewBox="0 0 10 10"><path d="M3.3 .3L9 .3L6.2 4.6Z" fill="#101870"/><circle cx="6.2" cy="2" r="1.1" fill="#20d8f0"/><circle cx="3.5" cy="5" r="2.5" fill="#3050e0"/><circle cx="5.5" cy="6" r="2.3" fill="#f07080"/></svg>
<svg class="ic" style="left:192px;top:38.5px" width="9" height="10" viewBox="0 0 9 10"><path d="M1 6L5 4L8 6L4 8Z" fill="#30c030" stroke="#222" stroke-width=".6"/><path d="M1 4L5 2L8 4L4 6Z" fill="#f0f0f0" stroke="#222" stroke-width=".6"/><path d="M5 1L8 1L6.5 3Z" fill="#1020a0"/></svg>
<svg class="ic" style="left:214px;top:38.5px" width="9" height="10" viewBox="0 0 9 10"><path d="M1.5 1.5H7.5L6.5 8H2.5Z" fill="#ccc" stroke="#aaa" stroke-width=".8"/></svg>
<svg class="ic" style="left:225px;top:38.5px" width="10" height="10" viewBox="0 0 10 10"><rect x="1" y="1" width="2.5" height="8" fill="#30d8e0"/><circle cx="6" cy="5.5" r="2.5" fill="#f0e020" stroke="#222" stroke-width=".7"/><path d="M5.5 8V9.5" stroke="#222" stroke-width="1"/></svg>
<svg class="ic" style="left:237px;top:38.5px" width="10" height="10" viewBox="0 0 10 10"><path d="M1 1L3 3M3 1L1 3" stroke="#e03030" stroke-width=".8"/><circle cx="6" cy="5.5" r="2.5" fill="#f0e020" stroke="#222" stroke-width=".7"/><path d="M5.5 8V9.5" stroke="#222" stroke-width="1"/></svg>
<svg class="ic" style="left:249px;top:38.5px" width="10" height="10" viewBox="0 0 10 10"><circle cx="3.5" cy="4.5" r="2.5" fill="#3050e0"/><circle cx="5" cy="4" r="2" fill="#f07080"/><circle cx="6" cy="5.5" r="2.5" fill="#f0e020" stroke="#222" stroke-width=".7"/><path d="M5.5 8V9.5" stroke="#222" stroke-width="1"/></svg>
<svg class="ic" style="left:260px;top:38.5px" width="10" height="10" viewBox="0 0 10 10"><path d="M1 1.5H3V8H1Z" fill="#ddd" stroke="#aaa" stroke-width=".7"/><circle cx="6" cy="5.5" r="2.5" fill="#bbb" stroke="#777" stroke-width=".7"/><path d="M5.5 8V9.5" stroke="#777" stroke-width="1"/></svg>
<svg class="ic" style="left:272px;top:38.5px" width="10" height="10" viewBox="0 0 10 10"><path d="M1 1.5H3V8H1Z" fill="#ddd" stroke="#aaa" stroke-width=".7"/><circle cx="6" cy="5.5" r="2.5" fill="#bbb" stroke="#777" stroke-width=".7"/><path d="M5.5 8V9.5" stroke="#777" stroke-width="1"/></svg>
<svg class="ic" style="left:286px;top:38.5px" width="10" height="10" viewBox="0 0 10 10"><circle cx="4.5" cy="4.5" r="3" fill="#bbb" stroke="#999" stroke-width=".7"/><path d="M4.5 7.5V9.5" stroke="#888" stroke-width="1.2"/></svg>
<svg class="ic" style="left:298px;top:38.5px" width="10" height="10" viewBox="0 0 10 10"><rect x="1" y="1" width="2.5" height="8" fill="#30d8e0"/><circle cx="6" cy="5.5" r="2.3" fill="#fff" stroke="#222" stroke-width="1.2"/><path d="M6 8V9.5" stroke="#222" stroke-width="1"/></svg>
<svg class="ic" style="left:310px;top:38.5px" width="10" height="10" viewBox="0 0 10 10"><path d="M1 1L3 3M3 1L1 3" stroke="#e03030" stroke-width=".8"/><circle cx="6" cy="5.5" r="2.3" fill="#fff" stroke="#222" stroke-width="1.2"/><path d="M6 8V9.5" stroke="#222" stroke-width="1"/></svg>
<svg class="ic" style="left:322px;top:38.5px" width="10" height="10" viewBox="0 0 10 10"><circle cx="3.5" cy="4.5" r="2.5" fill="#3050e0"/><circle cx="5" cy="4" r="2" fill="#f07080"/><circle cx="6" cy="5.5" r="2.3" fill="#fff" stroke="#222" stroke-width="1.2"/><path d="M6 8V9.5" stroke="#222" stroke-width="1"/></svg>
<svg class="ic" style="left:333px;top:38.5px" width="10" height="10" viewBox="0 0 10 10"><path d="M1 1.5H3V8H1Z" fill="#ddd" stroke="#aaa" stroke-width=".7"/><circle cx="6" cy="5.5" r="2.5" fill="#bbb" stroke="#777" stroke-width=".7"/><path d="M5.5 8V9.5" stroke="#777" stroke-width="1"/></svg>
<svg class="ic" style="left:344px;top:38.5px" width="10" height="10" viewBox="0 0 10 10"><path d="M1 1.5H3V8H1Z" fill="#ddd" stroke="#aaa" stroke-width=".7"/><circle cx="6" cy="5.5" r="2.5" fill="#bbb" stroke="#777" stroke-width=".7"/><path d="M5.5 8V9.5" stroke="#777" stroke-width="1"/></svg>
<svg class="ic" style="left:356px;top:38.5px" width="10" height="10" viewBox="0 0 10 10"><path d="M1 2H3V7H1ZM3.5 2H4.5V7" stroke="#222" fill="#fff" stroke-width=".8"/><circle cx="6" cy="5.5" r="2.3" fill="#fff" stroke="#222" stroke-width="1.2"/><path d="M6 8V9.5" stroke="#222" stroke-width="1"/></svg>
<svg class="ic" style="left:378px;top:39px" width="9" height="9" viewBox="0 0 9 9"><g stroke="#f0a0f0" stroke-width=".3"><path d="M.5 4.5Q4.5 0 8.5 4.5Q4.5 9 .5 4.5Z" fill="#2040e0"/><circle cx="4.5" cy="4.5" r="1.8" fill="#20e0f0"/></g></svg>
<svg class="ic" style="left:389px;top:39px" width="9" height="9" viewBox="0 0 9 9"><g stroke="#f0a0f0" stroke-width=".3"><path d="M.5 5.5L4.5 2L8.5 5.5Q4.5 8 .5 5.5Z" fill="#2040e0"/><path d="M2 5.5L4.5 3.5L7 5.5Z" fill="#20e0f0"/></g></svg>
<svg class="ic" style="left:400px;top:39px" width="9" height="9" viewBox="0 0 9 9"><g stroke="#f0a0f0" stroke-width=".3"><rect x=".5" y="4" width="8" height="2.2" fill="#111"/><rect x="1" y="3" width="7" height="1.3" fill="#20e0f0"/><rect x="3" y="2.3" width="3" height="1" fill="#2040e0"/></g></svg>
<svg class="ic" style="left:412px;top:39px" width="9" height="9" viewBox="0 0 9 9"><g stroke="#f0a0f0" stroke-width=".3"><path d="M.5 4H8.5L7.5 6H1.5Z" fill="#111"/><rect x="1" y="3" width="7" height="1.3" fill="#20e0f0"/><rect x="4" y="2" width="2" height="1" fill="#2040e0"/></g></svg>
<svg class="ic" style="left:423px;top:39px" width="9" height="9" viewBox="0 0 9 9"><g stroke="#f0a0f0" stroke-width=".3"><ellipse cx="4.5" cy="4.5" rx="4.2" ry="2.6" fill="#2040e0"/><circle cx="4.5" cy="4.5" r="1.5" fill="#20e0f0"/></g></svg>
<svg class="ic" style="left:434px;top:39px" width="9" height="9" viewBox="0 0 9 9"><g stroke="#f0a0f0" stroke-width=".3"><ellipse cx="4.5" cy="4.5" rx="4.2" ry="2.4" fill="#2040e0"/><rect x="1.5" y="3.8" width="6" height="1.4" fill="#20c0a0"/></g></svg>
<svg class="ic" style="left:451px;top:38.5px" width="9" height="10" viewBox="0 0 9 10"><path d="M1 5L4.5 1.5L8 5V8.5H1Z" fill="#c020e0" stroke="#222" stroke-width=".7"/><rect x="5.5" y="1" width="1.5" height="2.5" fill="#e06020"/><rect x="2" y="6" width="5" height="2.5" fill="#2020c0"/></svg>
<svg class="ic" style="left:473px;top:38.5px" width="9" height="10" viewBox="0 0 9 10"><path d="M1.5 1.5L7 8" stroke="#222" stroke-width="2.4"/><path d="M2 2L6.5 7.5" stroke="#30c0e0" stroke-width="1.1"/><path d="M5 1L8 2" stroke="#222" stroke-width=".8"/></svg>
<svg class="ic" style="left:488px;top:38.5px" width="10" height="10" viewBox="0 0 10 10"><circle cx="4" cy="4" r="3" fill="#fff" stroke="#222" stroke-width="1.1"/><rect x="2.5" y="2.5" width="3" height="3" fill="#555"/><path d="M6 6L8.5 8.8" stroke="#1830c0" stroke-width="1.5"/></svg>
<svg class="ic" style="left:500px;top:38.5px" width="10" height="10" viewBox="0 0 10 10"><circle cx="4" cy="4" r="3" fill="#fff" stroke="#222" stroke-width="1.1"/><path d="M2.5 4H5.5M4 2.5V5.5" stroke="#222" stroke-width=".9"/><path d="M6 6L8.5 8.8" stroke="#1830c0" stroke-width="1.5"/></svg>
<svg class="ic" style="left:511px;top:38.5px" width="10" height="10" viewBox="0 0 10 10"><circle cx="4" cy="4" r="3" fill="#fff" stroke="#222" stroke-width="1.1"/><path d="M8 1V4M6.5 2.5H9.5" stroke="#222" stroke-width=".8"/><path d="M6 6L8.5 8.8" stroke="#1830c0" stroke-width="1.5"/></svg>
<svg class="ic" style="left:522px;top:38.5px" width="10" height="10" viewBox="0 0 10 10"><circle cx="4" cy="4" r="3" fill="#fff" stroke="#bbb" stroke-width="1.1"/><path d="M2.5 4H5.5" stroke="#bbb" stroke-width=".9"/><path d="M6 6L8.5 8.8" stroke="#1830c0" stroke-width="1.5"/></svg>
<svg class="ic" style="left:534px;top:38.5px" width="10" height="10" viewBox="0 0 10 10"><path d="M2 3.5A3.2 3.2 0 0 1 7.5 3M8 6.5A3.2 3.2 0 0 1 2.5 7" stroke="#222" fill="none" stroke-width="1.1"/><path d="M6.5 1.5L8.5 3.5L6 4Z M3.5 8.5L1.5 6.5L4 6Z" fill="#222"/></svg>
<svg class="ic" style="left:546px;top:38.5px" width="10" height="10" viewBox="0 0 10 10"><path d="M5 .5V9.5M.5 5H9.5" stroke="#111" stroke-width="1.2"/><path d="M5 .3L3.3 2.3H6.7ZM5 9.7L3.3 7.7H6.7ZM.3 5L2.3 3.3V6.7ZM9.7 5L7.7 3.3V6.7Z" fill="#111"/></svg>
<svg class="ic" style="left:568px;top:38.5px" width="10" height="10" viewBox="0 0 10 10"><rect x=".8" y=".8" width="5" height="5" fill="#fff" stroke="#222" stroke-width=".9"/><rect x="3.5" y="3.5" width="5" height="5" fill="#fff" stroke="#222" stroke-width=".9"/></svg>
<div style="position:absolute;left:578px;top:37.8px;width:12px;height:11.700000000000003px;border:1px solid #484848;border-radius:2px;background:linear-gradient(#cfcfcf,#dedede 60%,#e6e6e6);box-shadow:inset 1px 1px 0 #b8b8b8"></div>
<svg class="ic" style="left:580px;top:38.5px" width="9" height="10" viewBox="0 0 9 10"><path d="M1 3L3 1H8V6L6 8.5H1Z" fill="#20d0e0" stroke="#222" stroke-width=".8"/><path d="M1 3H6V8.5M6 3L8 1" stroke="#222" fill="none" stroke-width=".6"/></svg>
<svg class="ic" style="left:590.5px;top:38.5px" width="10" height="10" viewBox="0 0 10 10"><path d="M1 3L3 1H9V6L7 8.5H1Z" fill="#20d0e0"/><path d="M1 3H7V8.5M7 3L9 1" stroke="#108898" fill="none" stroke-width=".7"/></svg>
<svg class="ic" style="left:602px;top:38.5px" width="9" height="10" viewBox="0 0 9 10"><path d="M1 3L3 1H7V6L5 8.5H1Z" fill="#20c0d0" stroke="#222" stroke-width="1"/><path d="M4 4L8 5L6 9Z" fill="#20c0d0" stroke="#222" stroke-width=".9"/></svg>
<svg class="ic" style="left:613px;top:38.5px" width="9" height="10" viewBox="0 0 9 10"><path d="M1 2L8 2L6 8L4.5 9L3 8Z" fill="#999"/></svg>
<svg class="ic" style="left:625px;top:38.5px" width="10" height="10" viewBox="0 0 10 10"><rect x=".5" y="1.5" width="8.5" height="6" fill="#fff" stroke="#222" stroke-width=".8"/><rect x="1" y="2" width="7.5" height="1.6" fill="#c02020"/><path d="M2 5H7" stroke="#c02020"/><path d="M7 8.5H9.5V6.5" stroke="#222"/></svg>
<div style="position:absolute;left:0px;top:51px;width:111px;height:464px;background:#f0f0f0"></div>
<div style="position:absolute;left:109px;top:51px;width:2px;height:464px;background:#fbfbfb"></div>
<div style="position:absolute;left:2px;top:53px;width:100px;height:6px;background:linear-gradient(90deg,#c2d6ec,#cadcf0 60%,#d6e4f4)"></div>
<div class="t" style="left:2.7px;top:52.95px;font-size:6.2px;line-height:6.2px;color:#303850;transform:scaleX(0.88);-webkit-text-stroke:0.12px #303850;">Entities</div>
<svg class="ic" style="left:104px;top:54px" width="5" height="5" viewBox="0 0 5 5"><path d="M1 1L4 4M4 1L1 4" stroke="#111" stroke-width="1"/></svg>
<div style="position:absolute;left:2px;top:60px;width:107px;height:1.3px;background:#646464"></div>
<div style="position:absolute;left:2px;top:60px;width:1px;height:181px;background:#3a3a3a"></div>
<div style="position:absolute;left:3px;top:61px;width:106px;height:12px;background:#f0f0f0"></div>
<div style="position:absolute;left:5px;top:62.3px;width:26px;height:10.5px;background:#fff;border:1px solid #a0a4b0;border-bottom:none;border-radius:1px 1px 0 0"></div>
<div class="t" style="left:9px;top:64.45px;font-size:6.2px;line-height:6.2px;color:#000;transform:scaleX(0.85);-webkit-text-stroke:0.15px #000;">Parents</div>
<div style="position:absolute;left:31px;top:63.5px;width:23.5px;height:9px;background:linear-gradient(#f4f4f4,#e2e2e2);border:1px solid #a0a4b0;border-left:none;border-bottom:none"></div>
<div class="t" style="left:33px;top:65.15px;font-size:6.2px;line-height:6.2px;color:#000;transform:scaleX(0.83);-webkit-text-stroke:0.15px #000;">Children</div>
<div style="position:absolute;left:3px;top:72.5px;width:98px;height:168px;background:#fff;border-top:1px solid #fff"></div>
<div style="position:absolute;left:100.5px;top:72.5px;width:8px;height:168px;background:linear-gradient(90deg,#e6e6e6,#f0f0f0)"></div>
<svg class="ic" style="left:101px;top:74px" width="7" height="6" viewBox="0 0 7 6"><path d="M1.5 4.5L3.5 2.2L5.5 4.5Z" fill="#222"/></svg>
<div style="position:absolute;left:101px;top:81px;width:7px;height:88.5px;background:linear-gradient(90deg,#e8e8e8,#d8d8d8 60%,#c4c4c4);border:1px solid #9a9a9a;border-radius:1.5px"></div>
<div style="position:absolute;left:103.2px;top:123px;width:2.5px;height:0.6px;background:#888"></div>
<div style="position:absolute;left:103.2px;top:124.5px;width:2.5px;height:0.6px;background:#888"></div>
<div style="position:absolute;left:103.2px;top:126px;width:2.5px;height:0.6px;background:#888"></div>
<svg class="ic" style="left:101px;top:234px" width="7" height="6" viewBox="0 0 7 6"><path d="M1.5 2L3.5 4.3L5.5 2Z" fill="#222"/></svg>
<div style="position:absolute;left:11.5px;top:87px;width:1px;height:150px;background:#dcdcdc"></div>
<div style="position:absolute;left:12px;top:77.1px;width:4.5px;height:1px;background:#d4d4d4"></div>
<svg class="ic" style="left:16.5px;top:74.3px" width="8" height="6" viewBox="0 0 8 6"><path d="M.3 3H2" stroke="#111" stroke-width="1"/><rect x="1.8" y="1" width="3" height="4" rx="1" fill="#f0e020" stroke="#111" stroke-width=".8"/><path d="M4.8 2H7.3M4.8 4H7.3" stroke="#111" stroke-width="1"/></svg>
<div class="t" style="left:27px;top:73.97px;font-size:6.3px;line-height:6.3px;color:#111;transform:scaleX(0.83);-webkit-text-stroke:0px #111;">Components</div>
<svg class="ic" style="left:9.5px;top:83.6px" width="4" height="4" viewBox="0 0 4 4"><path d="M3.5 .5V3.5H.5Z" fill="#222"/></svg>
<svg class="ic" style="left:16.5px;top:81.0px" width="8" height="8" viewBox="0 0 8 8"><path d="M.7 1.8 L4 .6 L7.4 1.4 L6 4.4 L4.2 7.4 L2 4.6 Z" fill="#f8ec10" stroke="#6a6ae0" stroke-width=".5"/><path d="M7.4 1.4 L6 4.4 L4.2 7.4 L2 4.6" fill="none" stroke="#111" stroke-width="1"/><path d="M3.2 2.6 L4.3 4.8 L5.2 2.5" stroke="#a09010" fill="none" stroke-width=".5"/></svg>
<div class="t" style="left:27px;top:81.97px;font-size:6.3px;line-height:6.3px;color:#111;transform:scaleX(0.83);-webkit-text-stroke:0px #111;">Surfaces</div>
<svg class="ic" style="left:19.0px;top:90.39999999999999px" width="5" height="6" viewBox="0 0 5 6"><rect x="0" y="0" width="5" height="6" fill="#fff"/><path d="M1.2 1L3.8 3L1.2 5Z" fill="#fff" stroke="#8a8a8a" stroke-width=".8"/></svg>
<svg class="ic" style="left:25.6px;top:89.0px" width="8" height="8" viewBox="0 0 8 8"><path d="M.7 1.8 L4 .6 L7.4 1.4 L6 4.4 L4.2 7.4 L2 4.6 Z" fill="#f8ec10" stroke="#6a6ae0" stroke-width=".5"/><path d="M7.4 1.4 L6 4.4 L4.2 7.4 L2 4.6" fill="none" stroke="#111" stroke-width="1"/><path d="M3.2 2.6 L4.3 4.8 L5.2 2.5" stroke="#a09010" fill="none" stroke-width=".5"/></svg>
<div class="t" style="left:36px;top:89.97px;font-size:6.3px;line-height:6.3px;color:#111;transform:scaleX(0.83);-webkit-text-stroke:0px #111;">Kiel_0</div>
<svg class="ic" style="left:19.0px;top:98.39999999999999px" width="5" height="6" viewBox="0 0 5 6"><rect x="0" y="0" width="5" height="6" fill="#fff"/><path d="M1.2 1L3.8 3L1.2 5Z" fill="#fff" stroke="#8a8a8a" stroke-width=".8"/></svg>
<svg class="ic" style="left:25.6px;top:97.0px" width="8" height="8" viewBox="0 0 8 8"><path d="M.7 1.8 L4 .6 L7.4 1.4 L6 4.4 L4.2 7.4 L2 4.6 Z" fill="#f8ec10" stroke="#6a6ae0" stroke-width=".5"/><path d="M7.4 1.4 L6 4.4 L4.2 7.4 L2 4.6" fill="none" stroke="#111" stroke-width="1"/><path d="M3.2 2.6 L4.3 4.8 L5.2 2.5" stroke="#a09010" fill="none" stroke-width=".5"/><path d="M5.6 5.6 L7.4 7.4" stroke="#222" stroke-width="1.2"/></svg>
<div class="t" style="left:36px;top:97.97px;font-size:6.3px;line-height:6.3px;color:#111;transform:scaleX(0.83);-webkit-text-stroke:0px #111;">Kiel_0_off</div>
<svg class="ic" style="left:19.0px;top:106.39999999999999px" width="5" height="6" viewBox="0 0 5 6"><rect x="0" y="0" width="5" height="6" fill="#fff"/><path d="M1.2 1L3.8 3L1.2 5Z" fill="#fff" stroke="#8a8a8a" stroke-width=".8"/></svg>
<svg class="ic" style="left:25.6px;top:105.0px" width="8" height="8" viewBox="0 0 8 8"><path d="M.7 1.8 L4 .6 L7.4 1.4 L6 4.4 L4.2 7.4 L2 4.6 Z" fill="#f8ec10" stroke="#6a6ae0" stroke-width=".5"/><path d="M7.4 1.4 L6 4.4 L4.2 7.4 L2 4.6" fill="none" stroke="#111" stroke-width="1"/><path d="M3.2 2.6 L4.3 4.8 L5.2 2.5" stroke="#a09010" fill="none" stroke-width=".5"/><path d="M5.6 5.6 L7.4 7.4" stroke="#222" stroke-width="1.2"/></svg>
<div class="t" style="left:36px;top:105.97px;font-size:6.3px;line-height:6.3px;color:#111;transform:scaleX(0.83);-webkit-text-stroke:0px #111;">Kiel_Ausrund</div>
<svg class="ic" style="left:19.0px;top:114.39999999999999px" width="5" height="6" viewBox="0 0 5 6"><rect x="0" y="0" width="5" height="6" fill="#fff"/><path d="M1.2 1L3.8 3L1.2 5Z" fill="#fff" stroke="#8a8a8a" stroke-width=".8"/></svg>
<svg class="ic" style="left:25.6px;top:113.0px" width="8" height="8" viewBox="0 0 8 8"><path d="M.7 1.8 L4 .6 L7.4 1.4 L6 4.4 L4.2 7.4 L2 4.6 Z" fill="#f8ec10" stroke="#6a6ae0" stroke-width=".5"/><path d="M7.4 1.4 L6 4.4 L4.2 7.4 L2 4.6" fill="none" stroke="#111" stroke-width="1"/><path d="M3.2 2.6 L4.3 4.8 L5.2 2.5" stroke="#a09010" fill="none" stroke-width=".5"/><path d="M5.6 5.6 L7.4 7.4" stroke="#222" stroke-width="1.2"/></svg>
<div class="t" style="left:36px;top:113.97px;font-size:6.3px;line-height:6.3px;color:#111;transform:scaleX(0.83);-webkit-text-stroke:0px #111;">Kiel_Ausrund_off</div>
<svg class="ic" style="left:19.0px;top:122.39999999999999px" width="5" height="6" viewBox="0 0 5 6"><rect x="0" y="0" width="5" height="6" fill="#fff"/><path d="M1.2 1L3.8 3L1.2 5Z" fill="#fff" stroke="#8a8a8a" stroke-width=".8"/></svg>
<svg class="ic" style="left:25.6px;top:121.0px" width="8" height="8" viewBox="0 0 8 8"><path d="M.7 1.8 L4 .6 L7.4 1.4 L6 4.4 L4.2 7.4 L2 4.6 Z" fill="#f8ec10" stroke="#6a6ae0" stroke-width=".5"/><path d="M7.4 1.4 L6 4.4 L4.2 7.4 L2 4.6" fill="none" stroke="#111" stroke-width="1"/><path d="M3.2 2.6 L4.3 4.8 L5.2 2.5" stroke="#a09010" fill="none" stroke-width=".5"/><path d="M5.6 5.6 L7.4 7.4" stroke="#222" stroke-width="1.2"/></svg>
<div class="t" style="left:36px;top:121.97px;font-size:6.3px;line-height:6.3px;color:#111;transform:scaleX(0.83);-webkit-text-stroke:0px #111;">Kielseite</div>
<svg class="ic" style="left:19.0px;top:130.4px" width="5" height="6" viewBox="0 0 5 6"><rect x="0" y="0" width="5" height="6" fill="#fff"/><path d="M1.2 1L3.8 3L1.2 5Z" fill="#fff" stroke="#8a8a8a" stroke-width=".8"/></svg>
<svg class="ic" style="left:25.6px;top:129.0px" width="8" height="8" viewBox="0 0 8 8"><path d="M.7 1.8 L4 .6 L7.4 1.4 L6 4.4 L4.2 7.4 L2 4.6 Z" fill="#f8ec10" stroke="#6a6ae0" stroke-width=".5"/><path d="M7.4 1.4 L6 4.4 L4.2 7.4 L2 4.6" fill="none" stroke="#111" stroke-width="1"/><path d="M3.2 2.6 L4.3 4.8 L5.2 2.5" stroke="#a09010" fill="none" stroke-width=".5"/><path d="M5.6 5.6 L7.4 7.4" stroke="#222" stroke-width="1.2"/></svg>
<div class="t" style="left:36px;top:129.97px;font-size:6.3px;line-height:6.3px;color:#111;transform:scaleX(0.83);-webkit-text-stroke:0px #111;">Kielsohle</div>
<svg class="ic" style="left:19.0px;top:138.4px" width="5" height="6" viewBox="0 0 5 6"><rect x="0" y="0" width="5" height="6" fill="#fff"/><path d="M1.2 1L3.8 3L1.2 5Z" fill="#fff" stroke="#8a8a8a" stroke-width=".8"/></svg>
<svg class="ic" style="left:25.6px;top:137.0px" width="8" height="8" viewBox="0 0 8 8"><path d="M.7 1.8 L4 .6 L7.4 1.4 L6 4.4 L4.2 7.4 L2 4.6 Z" fill="#f8ec10" stroke="#6a6ae0" stroke-width=".5"/><path d="M7.4 1.4 L6 4.4 L4.2 7.4 L2 4.6" fill="none" stroke="#111" stroke-width="1"/><path d="M3.2 2.6 L4.3 4.8 L5.2 2.5" stroke="#a09010" fill="none" stroke-width=".5"/><path d="M5.6 5.6 L7.4 7.4" stroke="#222" stroke-width="1.2"/></svg>
<div class="t" style="left:36px;top:137.97px;font-size:6.3px;line-height:6.3px;color:#111;transform:scaleX(0.83);-webkit-text-stroke:0px #111;">Rumpf</div>
<svg class="ic" style="left:19.0px;top:146.4px" width="5" height="6" viewBox="0 0 5 6"><rect x="0" y="0" width="5" height="6" fill="#fff"/><path d="M1.2 1L3.8 3L1.2 5Z" fill="#fff" stroke="#8a8a8a" stroke-width=".8"/></svg>
<svg class="ic" style="left:25.6px;top:145.0px" width="8" height="8" viewBox="0 0 8 8"><path d="M.7 1.8 L4 .6 L7.4 1.4 L6 4.4 L4.2 7.4 L2 4.6 Z" fill="#f8ec10" stroke="#6a6ae0" stroke-width=".5"/><path d="M7.4 1.4 L6 4.4 L4.2 7.4 L2 4.6" fill="none" stroke="#111" stroke-width="1"/><path d="M3.2 2.6 L4.3 4.8 L5.2 2.5" stroke="#a09010" fill="none" stroke-width=".5"/><path d="M5.6 5.6 L7.4 7.4" stroke="#222" stroke-width="1.2"/></svg>
<div class="t" style="left:36px;top:145.97px;font-size:6.3px;line-height:6.3px;color:#111;transform:scaleX(0.83);-webkit-text-stroke:0px #111;">Rumpf_0</div>
<svg class="ic" style="left:19.0px;top:154.4px" width="5" height="6" viewBox="0 0 5 6"><rect x="0" y="0" width="5" height="6" fill="#fff"/><path d="M1.2 1L3.8 3L1.2 5Z" fill="#fff" stroke="#8a8a8a" stroke-width=".8"/></svg>
<svg class="ic" style="left:25.6px;top:153.0px" width="8" height="8" viewBox="0 0 8 8"><path d="M.7 1.8 L4 .6 L7.4 1.4 L6 4.4 L4.2 7.4 L2 4.6 Z" fill="#f8ec10" stroke="#6a6ae0" stroke-width=".5"/><path d="M7.4 1.4 L6 4.4 L4.2 7.4 L2 4.6" fill="none" stroke="#111" stroke-width="1"/><path d="M3.2 2.6 L4.3 4.8 L5.2 2.5" stroke="#a09010" fill="none" stroke-width=".5"/><path d="M5.6 5.6 L7.4 7.4" stroke="#222" stroke-width="1.2"/></svg>
<div class="t" style="left:36px;top:153.97px;font-size:6.3px;line-height:6.3px;color:#111;transform:scaleX(0.83);-webkit-text-stroke:0px #111;">Rumpf_0_off</div>
<svg class="ic" style="left:19.0px;top:162.4px" width="5" height="6" viewBox="0 0 5 6"><rect x="0" y="0" width="5" height="6" fill="#fff"/><path d="M1.2 1L3.8 3L1.2 5Z" fill="#fff" stroke="#8a8a8a" stroke-width=".8"/></svg>
<svg class="ic" style="left:25.6px;top:161.0px" width="8" height="8" viewBox="0 0 8 8"><path d="M.7 1.8 L4 .6 L7.4 1.4 L6 4.4 L4.2 7.4 L2 4.6 Z" fill="#f8ec10" stroke="#6a6ae0" stroke-width=".5"/><path d="M7.4 1.4 L6 4.4 L4.2 7.4 L2 4.6" fill="none" stroke="#111" stroke-width="1"/><path d="M3.2 2.6 L4.3 4.8 L5.2 2.5" stroke="#a09010" fill="none" stroke-width=".5"/><path d="M5.6 5.6 L7.4 7.4" stroke="#222" stroke-width="1.2"/></svg>
<div class="t" style="left:36px;top:161.97px;font-size:6.3px;line-height:6.3px;color:#111;transform:scaleX(0.83);-webkit-text-stroke:0px #111;">Vorsteven</div>
<svg class="ic" style="left:9.3px;top:170.4px" width="5" height="6" viewBox="0 0 5 6"><rect x="0" y="0" width="5" height="6" fill="#fff"/><path d="M1.2 1L3.8 3L1.2 5Z" fill="#fff" stroke="#8a8a8a" stroke-width=".8"/></svg>
<svg class="ic" style="left:16.5px;top:169.1px" width="7" height="7" viewBox="0 0 7 7"><rect x="0" y="0" width="7" height="6.5" fill="#fff460"/><path d="M.5 6C1.5 4,2.5 3,3 4.5S5 2,6.5 .5" stroke="#111" fill="none" stroke-width=".9"/></svg>
<div class="t" style="left:27px;top:169.97px;font-size:6.3px;line-height:6.3px;color:#111;transform:scaleX(0.83);-webkit-text-stroke:0px #111;">Curves</div>
<svg class="ic" style="left:9.3px;top:178.4px" width="5" height="6" viewBox="0 0 5 6"><rect x="0" y="0" width="5" height="6" fill="#fff"/><path d="M1.2 1L3.8 3L1.2 5Z" fill="#fff" stroke="#8a8a8a" stroke-width=".8"/></svg>
<svg class="ic" style="left:16.5px;top:177.1px" width="7" height="7" viewBox="0 0 7 7"><rect x="0" y="0" width="7" height="6.5" fill="#fff460"/><path d="M1 .8L6 5.8M6 .8L1 5.8" stroke="#111" stroke-width=".9"/></svg>
<div class="t" style="left:27px;top:177.97px;font-size:6.3px;line-height:6.3px;color:#111;transform:scaleX(0.83);-webkit-text-stroke:0px #111;">Points</div>
<svg class="ic" style="left:9.3px;top:186.4px" width="5" height="6" viewBox="0 0 5 6"><rect x="0" y="0" width="5" height="6" fill="#fff"/><path d="M1.2 1L3.8 3L1.2 5Z" fill="#fff" stroke="#8a8a8a" stroke-width=".8"/></svg>
<svg class="ic" style="left:15.0px;top:184.1px" width="9" height="9" viewBox="0 0 9 9"><path d="M1 1L8 8" stroke="#333" stroke-width=".7"/><path d="M3 6L6.5 2.5L7.8 4L4.2 7.5Z" fill="#f8f060" stroke="#9aa0e0" stroke-width=".4"/></svg>
<div class="t" style="left:27px;top:185.97px;font-size:6.3px;line-height:6.3px;color:#111;transform:scaleX(0.83);-webkit-text-stroke:0px #111;">Planes</div>
<div style="position:absolute;left:12px;top:197.1px;width:4px;height:1px;background:#d4d4d4"></div>
<svg class="ic" style="left:16.5px;top:193.1px" width="7" height="7" viewBox="0 0 7 7"><rect x="0" y="0" width="7" height="7" fill="#fff460"/><path d="M1.5 .8V5.8H6M2 5.3L5 2.3" stroke="#111" fill="none" stroke-width=".9"/></svg>
<div class="t" style="left:27px;top:193.97px;font-size:6.3px;line-height:6.3px;color:#111;transform:scaleX(0.83);-webkit-text-stroke:0px #111;">Frames</div>
<div style="position:absolute;left:12px;top:205.1px;width:4px;height:1px;background:#d4d4d4"></div>
<svg class="ic" style="left:16.5px;top:201.1px" width="7" height="7" viewBox="0 0 7 7"><rect x=".5" y=".5" width="6" height="6" fill="#f4e820" stroke="#111" stroke-width="1"/><circle cx="3.5" cy="3.5" r=".8" fill="#8080e0"/></svg>
<div class="t" style="left:27px;top:201.97px;font-size:6.3px;line-height:6.3px;color:#111;transform:scaleX(0.83);-webkit-text-stroke:0px #111;">Triangle Meshes</div>
<div style="position:absolute;left:12px;top:213.1px;width:4px;height:1px;background:#d4d4d4"></div>
<svg class="ic" style="left:16.5px;top:209.1px" width="8" height="7" viewBox="0 0 8 7"><rect x=".3" y=".5" width="5" height="4.5" fill="#f4e820"/><path d="M3 6.5L7 .8" stroke="#c020c0" stroke-width="1.6"/><path d="M1 6.5H4" stroke="#111" stroke-width=".8"/></svg>
<div class="t" style="left:27px;top:209.97px;font-size:6.3px;line-height:6.3px;color:#111;transform:scaleX(0.83);-webkit-text-stroke:0px #111;">Wireframes</div>
<svg class="ic" style="left:9.3px;top:218.4px" width="5" height="6" viewBox="0 0 5 6"><rect x="0" y="0" width="5" height="6" fill="#fff"/><path d="M1.2 1L3.8 3L1.2 5Z" fill="#fff" stroke="#8a8a8a" stroke-width=".8"/></svg>
<svg class="ic" style="left:16.5px;top:217.1px" width="8" height="7" viewBox="0 0 8 7"><path d="M.5 2L3 .5L6 1L7.5 4L5.5 6.5L1.5 6Z" fill="#f4e820" stroke="#7060c0" stroke-width=".5"/><circle cx="4.5" cy="3.5" r="2" fill="#f08060"/><path d="M.5 2L2 5" stroke="#111" stroke-width=".6"/></svg>
<div class="t" style="left:27px;top:217.97px;font-size:6.3px;line-height:6.3px;color:#111;transform:scaleX(0.83);-webkit-text-stroke:0px #111;">Contours</div>
<div style="position:absolute;left:12px;top:229.1px;width:4px;height:1px;background:#d4d4d4"></div>
<svg class="ic" style="left:16.5px;top:225.1px" width="8" height="7" viewBox="0 0 8 7"><path d="M.5 2.5H5.5V6.5H.5Z" fill="#f4e820" stroke="#111" stroke-width=".9"/><path d="M.5 2.5L2.5 .5H7.5V4.5L5.5 6.5M5.5 2.5L7.5 .5" fill="#f4e820" stroke="#111" stroke-width=".9"/></svg>
<div class="t" style="left:27px;top:225.97px;font-size:6.3px;line-height:6.3px;color:#111;transform:scaleX(0.83);-webkit-text-stroke:0px #111;">Solids</div>
<div style="position:absolute;left:12px;top:237.1px;width:4px;height:1px;background:#d4d4d4"></div>
<svg class="ic" style="left:16.5px;top:233.1px" width="8" height="7" viewBox="0 0 8 7"><path d="M1 1L6.5 6M6.5 1L1 6" stroke="#111" stroke-width="2.4"/><path d="M1 1L6.5 6M6.5 1L1 6" stroke="#f4e820" stroke-width="1.3"/><circle cx="1.5" cy="1.5" r="1.2" fill="#f4e820" stroke="#111" stroke-width=".5"/><circle cx="6" cy="5.5" r="1.2" fill="#f4e820" stroke="#111" stroke-width=".5"/></svg>
<div class="t" style="left:27px;top:233.97px;font-size:6.3px;line-height:6.3px;color:#111;transform:scaleX(0.83);-webkit-text-stroke:0px #111;">Composite Surfaces</div>
<div style="position:absolute;left:3px;top:241px;width:106px;height:2px;background:#f0f0f0"></div>
<div style="position:absolute;left:0px;top:243px;width:111px;height:1px;background:#c8c2ba"></div>
<div style="position:absolute;left:2px;top:245px;width:100px;height:6px;background:linear-gradient(90deg,#c2d6ec,#cadcf0 60%,#d6e4f4)"></div>
<div class="t" style="left:2.7px;top:244.95px;font-size:6.2px;line-height:6.2px;color:#303850;transform:scaleX(0.88);-webkit-text-stroke:0.12px #303850;">Properties</div>
<svg class="ic" style="left:104px;top:246px" width="5" height="5" viewBox="0 0 5 5"><path d="M1 1L4 4M4 1L1 4" stroke="#111" stroke-width="1"/></svg>
<div style="position:absolute;left:2px;top:252px;width:107px;height:1.3px;background:#646464"></div>
<div style="position:absolute;left:2px;top:253px;width:1px;height:157px;background:#3a3a3a"></div>
<div style="position:absolute;left:3px;top:253.5px;width:105px;height:7px;background:#ececec;border-bottom:1px solid #707070"></div>
<div style="position:absolute;left:100px;top:253.3px;width:7.5px;height:7.5px;background:#f4f4f4;border-right:1px solid #505050;border-bottom:1px solid #505050"></div>
<svg class="ic" style="left:100.5px;top:253.5px" width="7" height="7" viewBox="0 0 7 7"><path d="M2 2.3A1.6 1.6 0 1 1 4 3.8V4.8" stroke="#111" stroke-width="1.8" fill="none"/><path d="M2 2.3A1.6 1.6 0 1 1 4 3.8V4.8" stroke="#e8e020" stroke-width=".9" fill="none"/><rect x="3.2" y="5.3" width="1.6" height="1.4" fill="#111"/></svg>
<div style="position:absolute;left:3px;top:261px;width:106px;height:1px;background:#fff"></div>
<div style="position:absolute;left:0px;top:412px;width:111px;height:1px;background:#c8c2ba"></div>
<div style="position:absolute;left:2px;top:414px;width:100px;height:6px;background:linear-gradient(90deg,#c2d6ec,#cadcf0 60%,#d6e4f4)"></div>
<div class="t" style="left:2.7px;top:413.95px;font-size:6.2px;line-height:6.2px;color:#303850;transform:scaleX(0.88);-webkit-text-stroke:0.12px #303850;">Selection Set</div>
<svg class="ic" style="left:104px;top:415px" width="5" height="5" viewBox="0 0 5 5"><path d="M1 1L4 4M4 1L1 4" stroke="#111" stroke-width="1"/></svg>
<div style="position:absolute;left:2px;top:421px;width:107px;height:1.3px;background:#646464"></div>
<div style="position:absolute;left:2px;top:422px;width:1px;height:90px;background:#3a3a3a"></div>
<div style="position:absolute;left:5.5px;top:422.6px;width:10.0px;height:10.0px;border:1px solid #484848;border-radius:2px;background:linear-gradient(#cfcfcf,#dedede 60%,#e6e6e6);box-shadow:inset 1px 1px 0 #b8b8b8"></div>
<svg class="ic" style="left:7px;top:424px" width="7" height="7" viewBox="0 0 7 7"><rect x=".5" y=".5" width="6" height="6" fill="#fff" stroke="#222" stroke-width=".9"/><path d="M2.5 .5V6.5M4.5 .5V6.5" stroke="#222" stroke-width=".9"/></svg>
<div style="position:absolute;left:18.5px;top:422.6px;width:9.5px;height:10px;background:#fafafa;border:1px solid #e0e0e0;border-radius:1px"></div>
<div style="position:absolute;left:30.5px;top:422.6px;width:9.5px;height:10px;background:#fafafa;border:1px solid #e0e0e0;border-radius:1px"></div>
<div style="position:absolute;left:42px;top:422.6px;width:9.5px;height:10px;background:#fafafa;border:1px solid #e0e0e0;border-radius:1px"></div>
<div style="position:absolute;left:54px;top:422.6px;width:9.5px;height:10px;background:#fafafa;border:1px solid #e0e0e0;border-radius:1px"></div>
<svg class="ic" style="left:19.5px;top:424px" width="7" height="7" viewBox="0 0 7 7"><path d="M3.5 6.5V1.5M1.5 3.5L3.5 1.2L5.5 3.5" stroke="#222" fill="none" stroke-width="1"/></svg>
<svg class="ic" style="left:31.5px;top:424px" width="7" height="7" viewBox="0 0 7 7"><path d="M3.5 .5V5.5M1.5 3.5L3.5 5.8L5.5 3.5" stroke="#222" fill="none" stroke-width="1"/></svg>
<svg class="ic" style="left:43px;top:424px" width="7" height="7" viewBox="0 0 7 7"><path d="M1 1L6 6M6 1L1 6" stroke="#c02828" stroke-width=".9"/></svg>
<svg class="ic" style="left:55px;top:423.5px" width="8" height="8" viewBox="0 0 8 8"><rect x=".5" y=".5" width="7" height="7" fill="#fff" stroke="#888" stroke-width=".5"/><rect x=".5" y=".5" width="7" height="1.5" fill="#3050d0"/><path d="M1.5 2.5L6.5 7M6.5 2.5L1.5 7" stroke="#c02828" stroke-width=".9"/></svg>
<div class="t" style="left:67px;top:425.97px;font-size:6.3px;line-height:6.3px;color:#000;transform:scaleX(0.83);-webkit-text-stroke:0.05px #000;">0 Entities</div>
<div style="position:absolute;left:5.3px;top:434.2px;width:103px;height:77.5px;background:#fff;border:1px solid #a0a8b8"></div>
<div style="position:absolute;left:6.3px;top:435px;width:101px;height:11.5px;background:linear-gradient(#f2f2f2,#e8e8e8)"></div>
<div class="t" style="left:8.8px;top:437.97px;font-size:6.3px;line-height:6.3px;color:#000;transform:scaleX(0.88);-webkit-text-stroke:0.05px #000;">Name</div>
<div class="t" style="left:81px;top:437.97px;font-size:6.3px;line-height:6.3px;color:#000;transform:scaleX(0.88);-webkit-text-stroke:0.05px #000;">Type</div>
<div style="position:absolute;left:6.3px;top:503.5px;width:101px;height:7.5px;background:#ececec"></div>
<svg class="ic" style="left:6.5px;top:504px" width="5" height="6" viewBox="0 0 5 6"><path d="M3.5 1.2L1.2 3L3.5 4.8Z" fill="#111"/></svg>
<div style="position:absolute;left:12px;top:503.5px;width:76px;height:7.2px;background:linear-gradient(#f4f4f4,#dcdcdc);border:1px solid #a0a0a0;border-radius:1.5px"></div>
<div style="position:absolute;left:47.5px;top:506px;width:3.5px;height:0.6px;background:#777"></div>
<div style="position:absolute;left:47.5px;top:507.3px;width:3.5px;height:0.6px;background:#777"></div>
<svg class="ic" style="left:102px;top:504px" width="5" height="6" viewBox="0 0 5 6"><path d="M1.2 1.2L3.5 3L1.2 4.8Z" fill="#111"/></svg>
<div style="position:absolute;left:111px;top:51px;width:589px;height:464px;background:#fff"></div>
<div style="position:absolute;left:111px;top:51px;width:588px;height:463px;background:#8080ff;border-left:1px solid #a8a88a;border-top:1px solid #8c8c64"></div>
<div style="position:absolute;left:112px;top:52px;width:587px;height:1px;background:#6262ec"></div>
<div style="position:absolute;left:697px;top:52px;width:2px;height:462px;background:#6c6cff"></div>
<div style="position:absolute;left:112px;top:513px;width:587px;height:1px;background:#6464ff"></div>
<div style="position:absolute;left:111px;top:514px;width:589px;height:1px;background:#fff"></div>
<div style="position:absolute;left:0px;top:515px;width:700px;height:1px;background:#b8b8a4"></div>
<svg class="ic" style="left:0;top:0" width="700" height="525" viewBox="0 0 700 525"><defs><linearGradient id="hg" gradientUnits="userSpaceOnUse" x1="0" y1="297" x2="0" y2="358"><stop offset="0" stop-color="#4a92de"/><stop offset=".35" stop-color="#4684d6"/><stop offset=".7" stop-color="#4872c8"/><stop offset="1" stop-color="#4060b8"/></linearGradient><linearGradient id="b1" gradientUnits="userSpaceOnUse" x1="0" y1="297" x2="0" y2="316"><stop offset="0" stop-color="#4a98e0"/><stop offset="1" stop-color="#4a96e0"/></linearGradient><linearGradient id="b2" gradientUnits="userSpaceOnUse" x1="0" y1="300" x2="0" y2="334"><stop offset="0" stop-color="#4a92de"/><stop offset="1" stop-color="#4680d0"/></linearGradient><linearGradient id="b3" gradientUnits="userSpaceOnUse" x1="0" y1="308" x2="0" y2="352"><stop offset="0" stop-color="#467cce"/><stop offset="1" stop-color="#4266bc"/></linearGradient><linearGradient id="shade" gradientUnits="userSpaceOnUse" x1="130" y1="0" x2="420" y2="0"><stop offset="0" stop-color="#102060" stop-opacity=".2"/><stop offset="1" stop-color="#102060" stop-opacity="0"/></linearGradient><linearGradient id="kg" gradientUnits="userSpaceOnUse" x1="340" y1="360" x2="470" y2="390"><stop offset="0" stop-color="#3e5cc0"/><stop offset=".45" stop-color="#4a86d8"/><stop offset="1" stop-color="#4c96e0"/></linearGradient></defs><path d="M300 355 C325 357,338 360,350 372 L373 399 L450 399 L483 352.3 Z" fill="#4e96dc"/><path d="M300 355 C325 357,338 360,350 372 Q430 369 483 352.3 L483 350 Z" fill="#4a6cd2"/><path d="M300 355 C325 357,338 360,350 372 L355 371 C343 362,330 358,310 356Z" fill="#5a70c8" opacity=".8"/><path d="M130.0 296.7 C144.5 297.2 187.8 298.6 217.0 299.6 C246.2 300.6 275.5 301.7 305.0 302.6 C334.5 303.5 364.5 304.5 394.0 305.2 C423.5 305.9 452.7 306.2 482.0 306.6 C511.3 307.0 540.7 307.4 570.0 307.4 C599.3 307.3 639.2 306.5 658.0 306.3 C676.8 306.1 678.8 306.1 683.0 306.0 L683 314  C678.8 314.6 676.8 314.1 658.0 317.8 C639.2 321.5 593.0 331.8 570.0 336.3 C547.0 340.8 534.7 342.3 520.0 345.0 C505.3 347.7 495.3 350.6 482.0 352.3 C468.7 354.1 454.7 354.7 440.0 355.5 C425.3 356.3 412.2 356.7 394.0 357.0 C375.8 357.3 345.8 357.4 331.0 357.2 C316.2 357.0 318.5 357.1 305.0 355.6 C291.5 354.2 264.7 351.1 250.0 348.5 C235.3 345.9 228.7 343.3 217.0 340.0 C205.3 336.7 188.6 331.4 180.0 328.7 C171.4 326.0 170.0 325.3 165.5 323.6 C161.0 321.9 155.6 319.5 153.0 318.3 C150.4 317.1 152.2 318.2 150.0 316.6 C147.8 315.0 142.2 311.1 139.5 308.6 C136.8 306.1 135.1 303.4 133.5 301.4 C131.9 299.4 130.6 297.5 130.0 296.7 Z" fill="#3e62b6"/><path d="M130.0 296.7 C144.5 297.2 187.8 298.6 217.0 299.6 C246.2 300.6 275.5 301.7 305.0 302.6 C334.5 303.5 364.5 304.5 394.0 305.2 C423.5 305.9 452.7 306.2 482.0 306.6 C511.3 307.0 540.7 307.4 570.0 307.4 C599.3 307.3 639.2 306.5 658.0 306.3 C676.8 306.1 678.8 306.1 683.0 306.0 L683 314 L658.0 317.8 C643.3 320.9 599.3 331.4 570.0 336.3 C540.7 341.2 511.3 344.4 482.0 347.1 C452.7 349.8 423.5 352.1 394.0 352.3 C364.5 352.5 329.0 350.1 305.0 348.2 C281.0 346.3 264.7 343.6 250.0 341.2 C235.3 338.8 228.7 336.5 217.0 333.9 C205.3 331.3 191.2 328.4 180.0 325.5 C168.8 322.6 155.0 318.1 150.0 316.6 Z" fill="url(#b3)"/><path d="M130.0 296.7 C144.5 297.2 187.8 298.6 217.0 299.6 C246.2 300.6 275.5 301.7 305.0 302.6 C334.5 303.5 364.5 304.5 394.0 305.2 C423.5 305.9 452.7 306.2 482.0 306.6 C511.3 307.0 540.7 307.4 570.0 307.4 C599.3 307.3 639.2 306.5 658.0 306.3 C676.8 306.1 678.8 306.1 683.0 306.0 L683.0 311.0 C678.8 311.5 676.8 311.5 658.0 314.0 C639.2 316.5 599.3 322.9 570.0 326.0 C540.7 329.1 511.3 331.5 482.0 332.7 C452.7 333.9 423.5 334.2 394.0 333.4 C364.5 332.6 329.0 329.9 305.0 328.1 C281.0 326.3 264.7 324.4 250.0 322.8 C235.3 321.2 228.7 319.9 217.0 318.4 C205.3 316.9 192.9 315.4 180.0 313.8 C167.1 312.2 146.2 309.5 139.5 308.6 Z" fill="url(#b2)"/><path d="M130.0 296.7 C144.5 297.2 187.8 298.6 217.0 299.6 C246.2 300.6 275.5 301.7 305.0 302.6 C334.5 303.5 364.5 304.5 394.0 305.2 C423.5 305.9 452.7 306.2 482.0 306.6 C511.3 307.0 540.7 307.4 570.0 307.4 C599.3 307.3 639.2 306.5 658.0 306.3 C676.8 306.1 678.8 306.1 683.0 306.0 L683.0 308.5 C678.8 308.8 676.8 309.1 658.0 310.0 C639.2 310.9 599.3 312.8 570.0 313.9 C540.7 314.9 511.3 316.1 482.0 316.3 C452.7 316.5 423.5 316.1 394.0 315.2 C364.5 314.3 334.5 312.3 305.0 310.9 C275.5 309.5 237.8 308.1 217.0 307.0 C196.2 305.9 193.9 305.5 180.0 304.6 C166.1 303.7 141.2 301.9 133.5 301.4 Z" fill="url(#b1)"/><path d="M130.0 296.7 C144.5 297.2 187.8 298.6 217.0 299.6 C246.2 300.6 275.5 301.7 305.0 302.6 C334.5 303.5 364.5 304.5 394.0 305.2 C423.5 305.9 452.7 306.2 482.0 306.6 C511.3 307.0 540.7 307.4 570.0 307.4 C599.3 307.3 639.2 306.5 658.0 306.3 C676.8 306.1 678.8 306.1 683.0 306.0 L683 314  C678.8 314.6 676.8 314.1 658.0 317.8 C639.2 321.5 593.0 331.8 570.0 336.3 C547.0 340.8 534.7 342.3 520.0 345.0 C505.3 347.7 495.3 350.6 482.0 352.3 C468.7 354.1 454.7 354.7 440.0 355.5 C425.3 356.3 412.2 356.7 394.0 357.0 C375.8 357.3 345.8 357.4 331.0 357.2 C316.2 357.0 318.5 357.1 305.0 355.6 C291.5 354.2 264.7 351.1 250.0 348.5 C235.3 345.9 228.7 343.3 217.0 340.0 C205.3 336.7 188.6 331.4 180.0 328.7 C171.4 326.0 170.0 325.3 165.5 323.6 C161.0 321.9 155.6 319.5 153.0 318.3 C150.4 317.1 152.2 318.2 150.0 316.6 C147.8 315.0 142.2 311.1 139.5 308.6 C136.8 306.1 135.1 303.4 133.5 301.4 C131.9 299.4 130.6 297.5 130.0 296.7 Z" fill="url(#shade)"/><path d="M331 352 L482 352 L486 351.5 L440 357.5 L394 358.5 L331 358 Z" fill="#2c4c88"/><path d="M331 355 L482 353.5" stroke="#7890a8" stroke-width=".7"/><path d="M133.5 302.5 C141.2 303.0 166.1 304.8 180.0 305.7 C193.9 306.6 196.2 307.1 217.0 308.1 C237.8 309.2 275.5 310.6 305.0 312.0 C334.5 313.4 364.5 315.4 394.0 316.3 C423.5 317.2 452.7 317.6 482.0 317.4 C511.3 317.2 540.7 316.1 570.0 315.0 C599.3 313.9 639.2 312.0 658.0 311.1 C676.8 310.2 678.8 309.9 683.0 309.6" fill="none" stroke="#3064b8" stroke-width=".9" opacity=".6"/><path d="M133.5 301.4 C141.2 301.9 166.1 303.7 180.0 304.6 C193.9 305.5 196.2 305.9 217.0 307.0 C237.8 308.1 275.5 309.5 305.0 310.9 C334.5 312.3 364.5 314.3 394.0 315.2 C423.5 316.1 452.7 316.5 482.0 316.3 C511.3 316.1 540.7 314.9 570.0 313.9 C599.3 312.8 639.2 310.9 658.0 310.0 C676.8 309.1 678.8 308.8 683.0 308.5" fill="none" stroke="#9ca6b8" stroke-width=".75"/><path d="M139.5 309.7 C146.2 310.6 167.1 313.3 180.0 314.9 C192.9 316.5 205.3 318.0 217.0 319.5 C228.7 321.0 235.3 322.3 250.0 323.9 C264.7 325.5 281.0 327.4 305.0 329.2 C329.0 331.0 364.5 333.7 394.0 334.5 C423.5 335.3 452.7 335.0 482.0 333.8 C511.3 332.6 540.7 330.2 570.0 327.1 C599.3 324.0 639.2 317.6 658.0 315.1 C676.8 312.6 678.8 312.6 683.0 312.1" fill="none" stroke="#3064b8" stroke-width=".9" opacity=".6"/><path d="M139.5 308.6 C146.2 309.5 167.1 312.2 180.0 313.8 C192.9 315.4 205.3 316.9 217.0 318.4 C228.7 319.9 235.3 321.2 250.0 322.8 C264.7 324.4 281.0 326.3 305.0 328.1 C329.0 329.9 364.5 332.6 394.0 333.4 C423.5 334.2 452.7 333.9 482.0 332.7 C511.3 331.5 540.7 329.1 570.0 326.0 C599.3 322.9 639.2 316.5 658.0 314.0 C676.8 311.5 678.8 311.5 683.0 311.0" fill="none" stroke="#9ca6b8" stroke-width=".75"/><path d="M150.0 317.7 C155.0 319.2 168.8 323.7 180.0 326.6 C191.2 329.5 205.3 332.4 217.0 335.0 C228.7 337.6 235.3 339.9 250.0 342.3 C264.7 344.7 281.0 347.4 305.0 349.3 C329.0 351.2 364.5 353.6 394.0 353.4 C423.5 353.2 452.7 350.9 482.0 348.2 C511.3 345.5 555.3 339.2 570.0 337.4" fill="none" stroke="#3064b8" stroke-width=".9" opacity=".6"/><path d="M150.0 316.6 C155.0 318.1 168.8 322.6 180.0 325.5 C191.2 328.4 205.3 331.3 217.0 333.9 C228.7 336.5 235.3 338.8 250.0 341.2 C264.7 343.6 281.0 346.3 305.0 348.2 C329.0 350.1 364.5 352.5 394.0 352.3 C423.5 352.1 452.7 349.8 482.0 347.1 C511.3 344.4 555.3 338.1 570.0 336.3" fill="none" stroke="#9ca6b8" stroke-width=".75"/><path d="M165.5 324.7 C174.1 327.4 202.9 336.9 217.0 341.0 C231.1 345.1 235.3 346.8 250.0 349.1 C264.7 351.5 291.5 353.9 305.0 355.1 C318.5 356.4 326.7 356.4 331.0 356.6" fill="none" stroke="#3064b8" stroke-width=".9" opacity=".6"/><path d="M165.5 323.6 C174.1 326.3 202.9 335.8 217.0 339.9 C231.1 344.0 235.3 345.6 250.0 348.0 C264.7 350.4 291.5 352.8 305.0 354.0 C318.5 355.2 326.7 355.2 331.0 355.5" fill="none" stroke="#9ca6b8" stroke-width=".75"/><path d="M130.0 297.6 C144.5 298.1 187.8 299.5 217.0 300.5 C246.2 301.5 275.5 302.6 305.0 303.5 C334.5 304.4 364.5 305.4 394.0 306.1 C423.5 306.8 452.7 307.1 482.0 307.5 C511.3 307.9 540.7 308.3 570.0 308.3 C599.3 308.2 639.2 307.4 658.0 307.2 C676.8 307.0 678.8 306.9 683.0 306.9" fill="none" stroke="#4aa0c8" stroke-width=".8"/><path d="M130.0 296.7 C144.5 297.2 187.8 298.6 217.0 299.6 C246.2 300.6 275.5 301.7 305.0 302.6 C334.5 303.5 364.5 304.5 394.0 305.2 C423.5 305.9 452.7 306.2 482.0 306.6 C511.3 307.0 540.7 307.4 570.0 307.4 C599.3 307.3 639.2 306.5 658.0 306.3 C676.8 306.1 678.8 306.1 683.0 306.0" fill="none" stroke="#b49ce0" stroke-width=".9"/><path d="M683.0 314.0 C678.8 314.6 676.8 314.1 658.0 317.8 C639.2 321.5 593.0 331.8 570.0 336.3 C547.0 340.8 534.7 342.3 520.0 345.0 C505.3 347.7 495.3 350.6 482.0 352.3 C468.7 354.1 454.7 354.7 440.0 355.5 C425.3 356.3 412.2 356.7 394.0 357.0 C375.8 357.3 345.8 357.4 331.0 357.2 C316.2 357.0 318.5 357.1 305.0 355.6 C291.5 354.2 259.2 349.7 250.0 348.5" fill="none" stroke="#a8b0c0" stroke-width=".9"/><path d="M250.0 348.5 C244.5 347.1 228.7 343.3 217.0 340.0 C205.3 336.7 188.6 331.4 180.0 328.7 C171.4 326.0 170.0 325.3 165.5 323.6 C161.0 321.9 155.6 319.5 153.0 318.3 C150.4 317.1 152.2 318.2 150.0 316.6 C147.8 315.0 142.2 311.1 139.5 308.6 C136.8 306.1 135.1 303.4 133.5 301.4 C131.9 299.4 130.6 297.5 130.0 296.7" fill="none" stroke="#98a0b8" stroke-width=".9"/><path d="M683.0 314.0 C678.8 314.6 676.8 314.1 658.0 317.8 C639.2 321.5 593.0 331.8 570.0 336.3 C547.0 340.8 534.7 342.3 520.0 345.0 C505.3 347.7 488.3 351.1 482.0 352.3" fill="none" stroke="#c8c890" stroke-width="1" stroke-dasharray="1.5 1"/><path d="M130.0 296.7 C130.6 297.5 131.9 299.4 133.5 301.4 C135.1 303.4 136.8 306.1 139.5 308.6 C142.2 311.1 147.8 315.0 150.0 316.6 C152.2 318.2 152.5 318.0 153.0 318.3" fill="none" stroke="#30d0f0" stroke-width="1"/><path d="M153 318.3 L161 321 L165.5 323.6" stroke="#d06060" stroke-width=".9"/><path d="M331 351.8 H482" stroke="#20d8f0" stroke-width="1"/><path d="M361 385.3 H460" stroke="#20d8f0" stroke-width="1"/><path d="M373 400 H450" stroke="#a060f0" stroke-width="1"/><path d="M373 399 H450" stroke="#20d8f0" stroke-width="1"/><path d="M482 352.3 L449.8 399" stroke="#40a8e0" stroke-width=".6"/><path d="M217.4 299.9 V339.9" stroke="#30d8f0" stroke-width=".9" opacity=".85"/><path d="M305.4 302.6 V355.7" stroke="#c8c8a0" stroke-width=".9" opacity=".85"/><path d="M393.9 305.3 V357.6" stroke="#d0d0b0" stroke-width=".9" opacity=".85"/><path d="M481.8 306.7 V352.2" stroke="#30d8f0" stroke-width=".9" opacity=".85"/><path d="M569.6 307.5 V336.3" stroke="#30d8f0" stroke-width=".9" opacity=".85"/><path d="M658 306.2 V317.8" stroke="#a8d8e8" stroke-width=".9" opacity=".85"/><path d="M680.7 306 V313.5" stroke="#e0e060" stroke-width=".9" opacity=".85"/><circle cx="217.4" cy="299.9" r="1.3" fill="#f4f020"/><circle cx="217.4" cy="307" r="1.3" fill="#f4f020"/><circle cx="217.4" cy="318.4" r="1.3" fill="#f4f020"/><circle cx="217.4" cy="333.9" r="1.3" fill="#f4f020"/><circle cx="217.4" cy="339.9" r="1.3" fill="#f4f020"/><circle cx="305.4" cy="302.6" r="1.3" fill="#f4f020"/><circle cx="305.4" cy="310.8" r="1.3" fill="#f4f020"/><circle cx="305.4" cy="328.1" r="1.3" fill="#f4f020"/><circle cx="305.4" cy="348.2" r="1.3" fill="#f4f020"/><circle cx="305.4" cy="353.9" r="1.3" fill="#f4f020"/><circle cx="305.4" cy="355.7" r="1.3" fill="#f4f020"/><circle cx="393.9" cy="305.3" r="1.3" fill="#f4f020"/><circle cx="393.9" cy="315.2" r="1.3" fill="#f4f020"/><circle cx="393.9" cy="333.4" r="1.3" fill="#f4f020"/><circle cx="393.9" cy="352.3" r="1.3" fill="#f4f020"/><circle cx="393.9" cy="354.6" r="1.3" fill="#f4f020"/><circle cx="393.9" cy="357.6" r="1.3" fill="#f4f020"/><circle cx="481.8" cy="306.7" r="1.3" fill="#f4f020"/><circle cx="481.8" cy="316.3" r="1.3" fill="#f4f020"/><circle cx="481.8" cy="332.7" r="1.3" fill="#f4f020"/><circle cx="481.8" cy="347.1" r="1.3" fill="#f4f020"/><circle cx="481.8" cy="352.2" r="1.3" fill="#f4f020"/><circle cx="569.6" cy="307.5" r="1.3" fill="#f4f020"/><circle cx="569.6" cy="313.9" r="1.3" fill="#f4f020"/><circle cx="569.6" cy="326" r="1.3" fill="#f4f020"/><circle cx="569.6" cy="336.3" r="1.3" fill="#f4f020"/><circle cx="658" cy="306.2" r="1.3" fill="#f4f020"/><circle cx="658" cy="310" r="1.3" fill="#f4f020"/><circle cx="658" cy="314" r="1.3" fill="#f4f020"/><circle cx="658" cy="317.8" r="1.3" fill="#f4f020"/><circle cx="680.7" cy="306" r="1.3" fill="#f4f020"/><circle cx="680.7" cy="308.5" r="1.3" fill="#f4f020"/><circle cx="680.7" cy="311" r="1.3" fill="#f4f020"/><circle cx="680.7" cy="313.5" r="1.3" fill="#f4f020"/><circle cx="130" cy="296.7" r="1.3" fill="#f4f020"/><circle cx="133.5" cy="301.4" r="1.3" fill="#f4f020"/><circle cx="139.5" cy="308.6" r="1.3" fill="#f4f020"/><circle cx="150" cy="316.6" r="1.3" fill="#f4f020"/><circle cx="153" cy="318.3" r="1.3" fill="#f4f020"/><circle cx="161" cy="321" r="1.2" fill="#20e020"/><circle cx="165.5" cy="323.6" r="1.2" fill="#20e020"/><circle cx="331" cy="351.8" r="1.1" fill="#20e020"/><circle cx="361" cy="351.8" r="1.1" fill="#20e020"/><circle cx="397" cy="351.8" r="1.1" fill="#20e020"/><circle cx="448" cy="351.8" r="1.1" fill="#20e020"/><circle cx="361" cy="385.3" r="1.1" fill="#20e020"/><circle cx="377" cy="385.3" r="1.1" fill="#20e020"/><circle cx="405.5" cy="385.3" r="1.1" fill="#20e020"/><circle cx="435" cy="385.3" r="1.1" fill="#20e020"/><circle cx="460" cy="385.3" r="1.3" fill="#f4f020"/><circle cx="373.5" cy="399" r="1.1" fill="#20e020"/><circle cx="385.6" cy="399" r="1.1" fill="#20e020"/><circle cx="411" cy="399" r="1.1" fill="#20e020"/><circle cx="430" cy="399" r="1.1" fill="#20e020"/><circle cx="450" cy="399" r="1.3" fill="#f4f020"/><circle cx="485" cy="352" r="1.2" fill="#f4f020"/><path d="M115 337.5 H697" stroke="#5050a8" stroke-width="1" stroke-dasharray="1 3"/><path d="M658.5 62 V511" stroke="#5050a8" stroke-width="1" stroke-dasharray="1 3"/><path d="M112.3 339 L116.8 343.5 M116.8 339 L112.3 343.5" stroke="#000" stroke-width="1.4"/><path d="M657 338.8 L659.6 341.5 L662.2 338.8 M659.6 341.5 V344.5" stroke="#000" stroke-width="1.3" fill="none"/><path d="M657 54.5 H662 L657 59.5 H662" stroke="#000" stroke-width="1.2" fill="none"/><path d="M395 239.8 Q416 238.8 438 239.8" stroke="#20d8f0" stroke-width=".8" fill="none"/><text x="146" y="171.3" fill="#20e8ff" fill-opacity=".82" style="font-family:&quot;Liberation Mono&quot;,monospace;font-size:11.25px">Required Values</text><text x="146" y="182.4" fill="#f4505e" fill-opacity=".82" style="font-family:&quot;Liberation Mono&quot;,monospace;font-size:11.25px">Wx: 801.8 kg</text><text x="146" y="193.5" fill="#f4505e" fill-opacity=".82" style="font-family:&quot;Liberation Mono&quot;,monospace;font-size:11.25px">bmx: 1.470 m</text><text x="146" y="204.6" fill="#f4505e" fill-opacity=".82" style="font-family:&quot;Liberation Mono&quot;,monospace;font-size:11.25px">Fx: 0.404 m</text><text x="146" y="215.7" fill="#f4505e" fill-opacity=".82" style="font-family:&quot;Liberation Mono&quot;,monospace;font-size:11.25px">Kx: 1.624 m</text><text x="146" y="226.8" fill="#f4505e" fill-opacity=".82" style="font-family:&quot;Liberation Mono&quot;,monospace;font-size:11.25px">Ff+Fa: 0.908 m</text><text x="266.5" y="182.3" fill="#ffffff" fill-opacity=".82" style="font-family:&quot;Liberation Mono&quot;,monospace;font-size:11.25px">Ff: 0.586 m</text><text x="266.5" y="193.3" fill="#ffffff" fill-opacity=".82" style="font-family:&quot;Liberation Mono&quot;,monospace;font-size:11.25px">Fa: 0.458 m</text><text x="266.5" y="204.3" fill="#ffffff" fill-opacity=".82" style="font-family:&quot;Liberation Mono&quot;,monospace;font-size:11.25px">Fxm: 0.478 m</text><text x="257" y="215.4" fill="#ffffff" fill-opacity=".82" style="font-family:&quot;Liberation Mono&quot;,monospace;font-size:11.25px">Ff+Fa: 1.044 m</text><text x="364.6" y="171.2" fill="#20e8ff" fill-opacity=".82" style="font-family:&quot;Liberation Mono&quot;,monospace;font-size:11.25px">Measured Values</text><text x="364.6" y="182.3" fill="#ffffff" fill-opacity=".82" style="font-family:&quot;Liberation Mono&quot;,monospace;font-size:11.25px">Lm: 6.597 m</text><text x="364.6" y="193.4" fill="#ffffff" fill-opacity=".82" style="font-family:&quot;Liberation Mono&quot;,monospace;font-size:11.25px">Km: 1.627 m</text><text x="364.6" y="204.5" fill="#ffffff" fill-opacity=".82" style="font-family:&quot;Liberation Mono&quot;,monospace;font-size:11.25px">h1m: 0.401 m</text><text x="364.6" y="215.60000000000002" fill="#ffffff" fill-opacity=".82" style="font-family:&quot;Liberation Mono&quot;,monospace;font-size:11.25px">h2m: 0.190 m</text><text x="364.6" y="226.70000000000002" fill="#ffffff" fill-opacity=".82" style="font-family:&quot;Liberation Mono&quot;,monospace;font-size:11.25px">b0m: 1.624 m</text><text x="364.6" y="237.8" fill="#ffffff" fill-opacity=".82" style="font-family:&quot;Liberation Mono&quot;,monospace;font-size:11.25px">b1m: 1.527 m</text><text x="364.6" y="248.9" fill="#ffffff" fill-opacity=".82" style="font-family:&quot;Liberation Mono&quot;,monospace;font-size:11.25px">b2m: 1.220 m</text><text x="364.6" y="260.0" fill="#ffffff" fill-opacity=".82" style="font-family:&quot;Liberation Mono&quot;,monospace;font-size:11.25px">bmm: 1.492 m</text><text x="481.3" y="182.4" fill="#ffffff" fill-opacity=".82" style="font-family:&quot;Liberation Mono&quot;,monospace;font-size:11.25px">Bm: 0.323 m</text><text x="481.3" y="193.4" fill="#ffffff" fill-opacity=".82" style="font-family:&quot;Liberation Mono&quot;,monospace;font-size:11.25px">L0: 5.565 m</text><text x="481.3" y="204.4" fill="#ffffff" fill-opacity=".82" style="font-family:&quot;Liberation Mono&quot;,monospace;font-size:11.25px">p: 0.395 m</text><text x="481.3" y="215.4" fill="#ffffff" fill-opacity=".82" style="font-family:&quot;Liberation Mono&quot;,monospace;font-size:11.25px">p/h0: 3.04</text><text x="481.3" y="226.4" fill="#ffffff" fill-opacity=".82" style="font-family:&quot;Liberation Mono&quot;,monospace;font-size:11.25px">Rmax: 0.304 m</text><text x="582.5" y="171.3" fill="#20e8ff" fill-opacity=".82" style="font-family:&quot;Liberation Mono&quot;,monospace;font-size:11.25px">Table Values</text><text x="582.5" y="182.5" fill="#ffffff" fill-opacity=".82" style="font-family:&quot;Liberation Mono&quot;,monospace;font-size:11.25px">Li: 6.50 m</text><text x="582.5" y="193.55" fill="#ffffff" fill-opacity=".82" style="font-family:&quot;Liberation Mono&quot;,monospace;font-size:11.25px">Wi: 790 kg</text><text x="582.5" y="204.6" fill="#ffffff" fill-opacity=".82" style="font-family:&quot;Liberation Mono&quot;,monospace;font-size:11.25px">bmi: 1.46 m</text><text x="582.5" y="215.65" fill="#ffffff" fill-opacity=".82" style="font-family:&quot;Liberation Mono&quot;,monospace;font-size:11.25px">Fi: 0.40 m</text><text x="582.5" y="226.7" fill="#ffffff" fill-opacity=".82" style="font-family:&quot;Liberation Mono&quot;,monospace;font-size:11.25px">Ki: 1.60 m</text><text x="582.5" y="237.75" fill="#ffffff" fill-opacity=".82" style="font-family:&quot;Liberation Mono&quot;,monospace;font-size:11.25px">h0: 0.13 m</text><text x="582.5" y="248.8" fill="#ffffff" fill-opacity=".82" style="font-family:&quot;Liberation Mono&quot;,monospace;font-size:11.25px">h1: 0.40 m</text><text x="582.5" y="259.85" fill="#ffffff" fill-opacity=".82" style="font-family:&quot;Liberation Mono&quot;,monospace;font-size:11.25px">h2: 0.19 m</text><text x="582.5" y="270.9" fill="#ffffff" fill-opacity=".82" style="font-family:&quot;Liberation Mono&quot;,monospace;font-size:11.25px">a1: 0.18 m</text><text x="582.5" y="281.95" fill="#ffffff" fill-opacity=".82" style="font-family:&quot;Liberation Mono&quot;,monospace;font-size:11.25px">a2: 0.61 m</text><text x="582.5" y="293.0" fill="#ffffff" fill-opacity=".82" style="font-family:&quot;Liberation Mono&quot;,monospace;font-size:11.25px">h1+Fi: 0.80 m</text></svg>
<div style="position:absolute;left:0px;top:516px;width:700px;height:6px;background:#f0eeec"></div>
<div style="position:absolute;left:0px;top:522px;width:700px;height:1px;background:#fff"></div>
<div style="position:absolute;left:0px;top:523px;width:700px;height:2px;background:#8e8e8e"></div>
<div style="position:absolute;left:0px;top:523px;width:30px;height:2px;background:#8898b0"></div>
<div style="position:absolute;left:109px;top:523px;width:26px;height:2px;background:#a0b0c4"></div>
<div style="position:absolute;left:293px;top:523px;width:25px;height:2px;background:#a0b0c4"></div>
<div style="position:absolute;left:439px;top:516px;width:1px;height:6px;background:#c8c4c0"></div>
<div style="position:absolute;left:496px;top:516px;width:1px;height:6px;background:#c8c4c0"></div>
<div style="position:absolute;left:540px;top:516px;width:1px;height:6px;background:#c8c4c0"></div>
<div style="position:absolute;left:583px;top:516px;width:1px;height:6px;background:#c8c4c0"></div>
<div style="position:absolute;left:647px;top:516px;width:1px;height:6px;background:#c8c4c0"></div>
<div class="t" style="left:282px;top:517.97px;font-size:6.3px;line-height:6.3px;color:#1a1410;transform:scaleX(0.88);-webkit-text-stroke:0.15px #1a1410;">L0</div>
<div class="t" style="left:498px;top:517.97px;font-size:6.3px;line-height:6.3px;color:#1a1410;transform:scaleX(0.88);-webkit-text-stroke:0.15px #1a1410;">Lat 0.0</div>
<div class="t" style="left:542px;top:517.97px;font-size:6.3px;line-height:6.3px;color:#1a1410;transform:scaleX(0.88);-webkit-text-stroke:0.15px #1a1410;">Lon 90.0</div>
<div class="t" style="left:585px;top:517.97px;font-size:6.3px;line-height:6.3px;color:#1a1410;transform:scaleX(0.88);-webkit-text-stroke:0.15px #1a1410;">Radius 12.4</div>
<div class="t" style="left:650px;top:517.97px;font-size:6.3px;line-height:6.3px;color:#1a1410;transform:scaleX(0.88);-webkit-text-stroke:0.15px #1a1410;">Tilt 0.0</div>
</body></html>
